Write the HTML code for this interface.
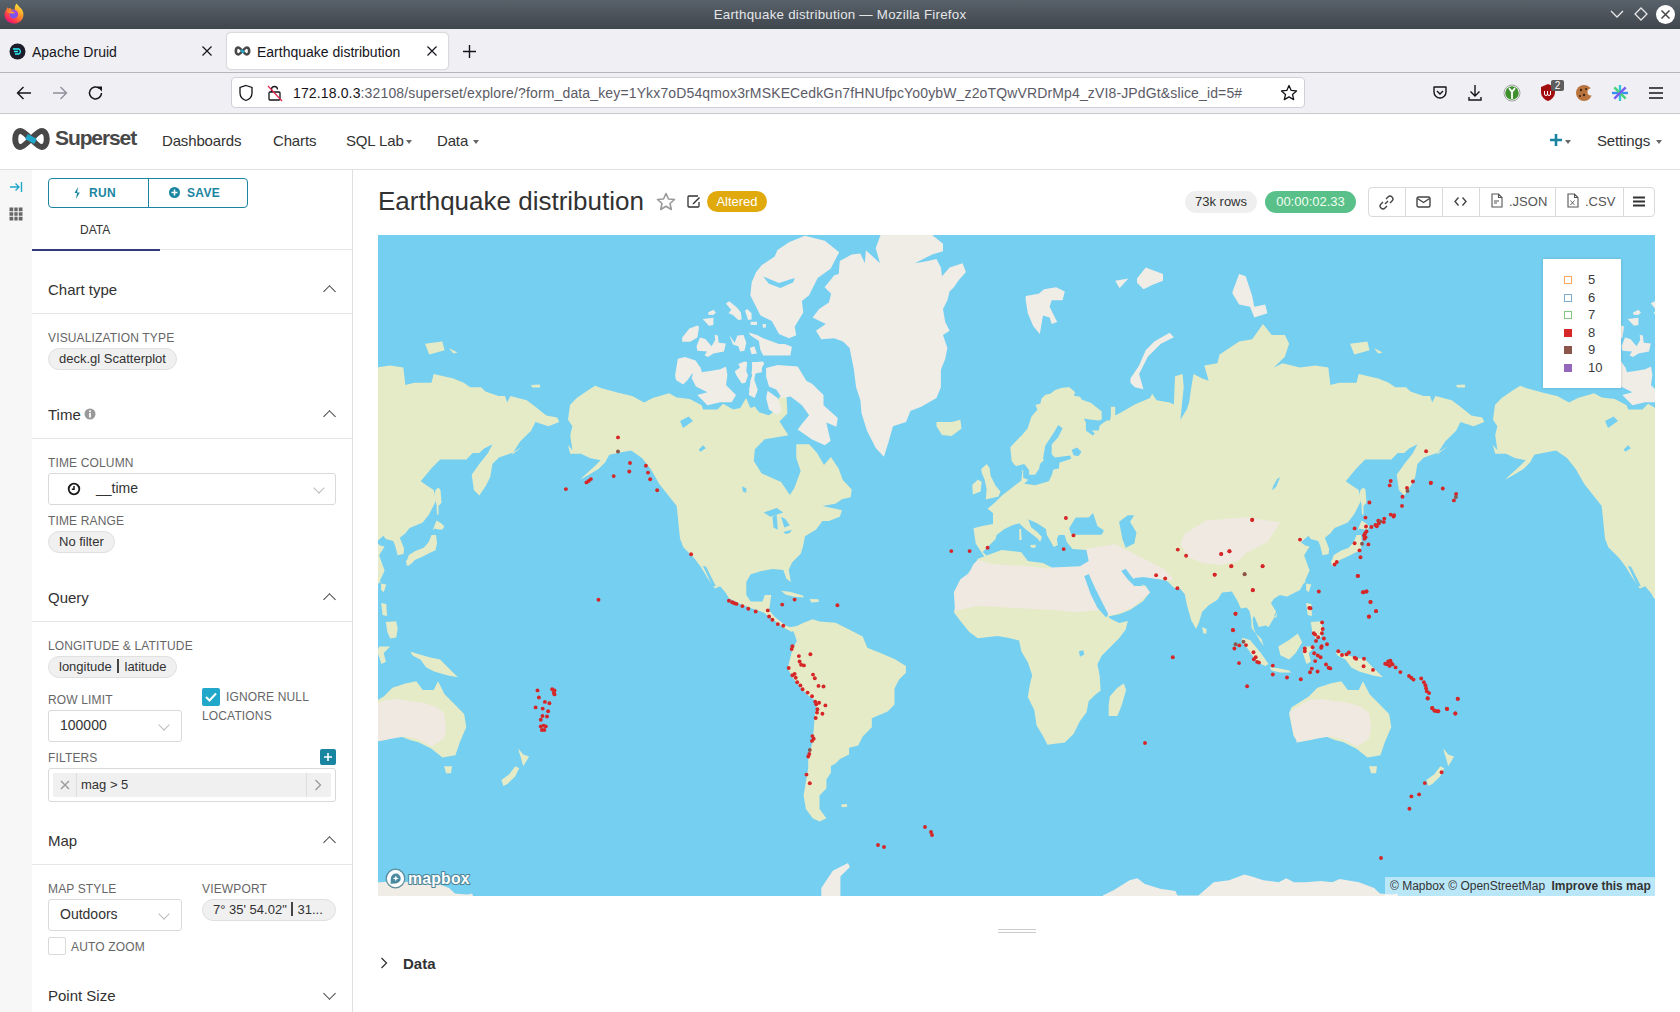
<!DOCTYPE html>
<html><head><meta charset="utf-8">
<style>
*{box-sizing:border-box;margin:0;padding:0}
html,body{width:1680px;height:1012px;overflow:hidden;background:#fff;font-family:"Liberation Sans",sans-serif;position:relative}
.a{position:absolute;white-space:nowrap}
#titlebar{left:0;top:0;width:1680px;height:29px;background:linear-gradient(#59616a,#3f464d)}
#tabbar{left:0;top:29px;width:1680px;height:44px;background:#f0f0f4;border-bottom:1px solid #b6b6ba}
#navbar{left:0;top:73px;width:1680px;height:41px;background:#f0f0f4;border-bottom:1px solid #c9c9cc}
.tabtxt{font-size:14px;color:#15141a;top:44px}
#urlbar{left:231px;top:77px;width:1074px;height:31px;background:#fff;border:1px solid #cfcfd8;border-radius:4px}
#sshead{left:0;top:114px;width:1680px;height:56px;background:#fff;border-bottom:1px solid #e0e0e0}
.nav{font-size:15px;color:#323232;top:132px;letter-spacing:-0.15px}
.caret{width:0;height:0;border-left:3.5px solid transparent;border-right:3.5px solid transparent;border-top:4px solid #666}
#leftstrip{left:0;top:170px;width:32px;height:842px;background:#f7f7f7}
#panel{left:32px;top:170px;width:321px;height:842px;background:#fff;border-right:1px solid #e0e0e0}
.sec{font-size:15px;color:#323232;left:48px}
.lbl{font-size:12px;color:#666;left:48px;letter-spacing:0.15px}
.div{left:32px;width:320px;height:1px;background:#e6e6e6}
.chip{background:#f0f0f0;border:1px solid #e0e0e0;border-radius:11px;font-size:13px;color:#323232;height:22px;line-height:20px;padding:0 10px}
.sel{border:1px solid #d9d9d9;border-radius:3px;background:#fff}
.up{width:9px;height:9px;border-left:1.6px solid #444;border-top:1.6px solid #444;transform:rotate(45deg)}
.dn{width:9px;height:9px;border-right:1.6px solid #444;border-bottom:1.6px solid #444;transform:rotate(45deg)}
.chev{width:8px;height:8px;border-right:1px solid #bbb;border-bottom:1px solid #bbb;transform:rotate(45deg)}
</style></head><body>

<!-- window title bar -->
<div class="a" id="titlebar"></div>
<div class="a" style="left:0;top:7px;width:1680px;text-align:center;font-size:13.3px;letter-spacing:0.25px;color:#e4e6e8">Earthquake distribution — Mozilla Firefox</div>
<svg class="a" style="left:4px;top:3px" width="21" height="21" viewBox="0 0 21 21"><defs><linearGradient id="ffg" x1="0.85" y1="0.1" x2="0.25" y2="0.95"><stop offset="0" stop-color="#ffe83a"/><stop offset="0.45" stop-color="#ff8a2a"/><stop offset="0.8" stop-color="#ff3450"/><stop offset="1" stop-color="#e6177a"/></linearGradient><radialGradient id="ffp" cx="0.45" cy="0.7" r="0.7"><stop offset="0" stop-color="#6b5cf0"/><stop offset="1" stop-color="#a93ee6"/></radialGradient></defs><path d="M12.4 0.6 C14 2.4 14.9 3.6 16.6 5 C18.6 7 19.6 9.3 19.4 12 C19.2 17 15 20.6 9.8 20.6 C4.5 20.6 0.6 16.6 0.6 11.8 C0.6 9.2 1.6 7.5 2.7 5.9 L3.2 4.2 L4.6 5.8 L6.3 4.7 L7.2 6.8 C8.5 6.3 9.8 6.5 10.8 7.1 C10.5 4.6 11 2.3 12.4 0.6Z" fill="url(#ffg)"/><circle cx="9.8" cy="11.2" r="4.3" fill="url(#ffp)"/><path d="M2.6 8.4 L8.5 8.6 L11.2 9.8 L9 10.6 L6.5 10.2Z" fill="#ffa51f"/></svg>
<svg class="a" style="left:1610px;top:8px" width="14" height="12"><path d="M1 3 L7 9 L13 3" stroke="#e8e8e8" stroke-width="1.3" fill="none"/></svg>
<svg class="a" style="left:1634px;top:7px" width="14" height="14"><path d="M7 1 L13 7 L7 13 L1 7Z" stroke="#e8e8e8" stroke-width="1.3" fill="none"/></svg>
<svg class="a" style="left:1655px;top:4px" width="21" height="21"><circle cx="10.5" cy="10.5" r="9.5" fill="#fff"/><path d="M6.5 6.5 L14.5 14.5 M14.5 6.5 L6.5 14.5" stroke="#444" stroke-width="1.5"/></svg>

<!-- tab bar -->
<div class="a" id="tabbar"></div>
<svg class="a" style="left:9px;top:43px" width="17" height="17"><circle cx="8.5" cy="8.5" r="8" fill="#1c1c2a"/><path d="M4 6 H10 A3 3 0 0 1 10 11 H6 M5 8.5 H9" stroke="#2ceefc" stroke-width="1.3" fill="none"/></svg>
<div class="a tabtxt" style="left:32px">Apache Druid</div>
<svg class="a" style="left:201px;top:45px" width="12" height="12"><path d="M1.5 1.5 L10.5 10.5 M10.5 1.5 L1.5 10.5" stroke="#15141a" stroke-width="1.2"/></svg>
<div class="a" style="left:227px;top:33px;width:221px;height:36px;background:#fff;border-radius:4px;box-shadow:0 0 2px rgba(0,0,0,0.35)"></div>
<svg class="a" style="left:234px;top:46px" width="17" height="10" viewBox="0 0 17 10"><path d="M4.3 1.5 C1 1.5 1 8.5 4.3 8.5 C6.5 8.5 10.5 1.5 12.7 1.5 C16 1.5 16 8.5 12.7 8.5 C10.5 8.5 6.5 1.5 4.3 1.5Z" stroke="#484848" stroke-width="2.6" fill="none"/><path d="M7 4 L10 6.5" stroke="#20a7c9" stroke-width="2.4"/></svg>
<div class="a tabtxt" style="left:257px">Earthquake distribution</div>
<svg class="a" style="left:426px;top:45px" width="12" height="12"><path d="M1.5 1.5 L10.5 10.5 M10.5 1.5 L1.5 10.5" stroke="#15141a" stroke-width="1.2"/></svg>
<svg class="a" style="left:462px;top:44px" width="15" height="15"><path d="M7.5 1 V14 M1 7.5 H14" stroke="#15141a" stroke-width="1.4"/></svg>

<!-- nav bar -->
<div class="a" id="navbar"></div>
<svg class="a" style="left:15px;top:85px" width="18" height="16"><path d="M16 8 H2.5 M8.5 2 L2.5 8 L8.5 14" stroke="#15141a" stroke-width="1.4" fill="none"/></svg>
<svg class="a" style="left:51px;top:85px" width="18" height="16"><path d="M2 8 H15.5 M9.5 2 L15.5 8 L9.5 14" stroke="#8f8f9d" stroke-width="1.4" fill="none"/></svg>
<svg class="a" style="left:87px;top:84px" width="18" height="18"><path d="M14.5 9 A6 6 0 1 1 12.5 4.5" stroke="#15141a" stroke-width="1.5" fill="none"/><path d="M10 2.5 L15 2.5 L15 7.5Z" fill="#15141a"/></svg>
<div class="a" id="urlbar"></div>
<svg class="a" style="left:238px;top:84px" width="16" height="18"><path d="M8 1.5 L14 3.5 V9 C14 13 11 15.5 8 16.5 C5 15.5 2 13 2 9 V3.5Z" stroke="#15141a" stroke-width="1.3" fill="none"/></svg>
<svg class="a" style="left:266px;top:84px" width="18" height="18"><rect x="3" y="8" width="11" height="8" rx="1" stroke="#15141a" stroke-width="1.3" fill="none"/><path d="M5.5 8 V5.5 A3 3 0 0 1 11.5 5.5" stroke="#15141a" stroke-width="1.3" fill="none"/><path d="M2 2 L16 17" stroke="#e22850" stroke-width="1.3"/></svg>
<div class="a" style="left:293px;top:85px;font-size:14px;color:#15141a;letter-spacing:0.14px">172.18.0.3<span style="color:#5b5b66">:32108/superset/explore/?form_data_key=1Ykx7oD54qmox3rMSKECedkGn7fHNUfpcYo0ybW_z2oTQwVRDrMp4_zVI8-JPdGt&amp;slice_id=5#</span></div>
<svg class="a" style="left:1280px;top:84px" width="18" height="18"><path d="M9 1.5 L11.2 6.4 L16.5 6.9 L12.5 10.4 L13.7 15.6 L9 12.9 L4.3 15.6 L5.5 10.4 L1.5 6.9 L6.8 6.4Z" stroke="#15141a" stroke-width="1.3" fill="none" stroke-linejoin="round"/></svg>
<svg class="a" style="left:1432px;top:85px" width="16" height="16"><path d="M2 2 H14 V7 A6 6 0 0 1 2 7Z" stroke="#15141a" stroke-width="1.4" fill="none" stroke-linejoin="round"/><path d="M5 6 L8 9 L11 6" stroke="#15141a" stroke-width="1.4" fill="none"/></svg>
<svg class="a" style="left:1467px;top:84px" width="16" height="18"><path d="M8 1 V12 M3.5 7.5 L8 12 L12.5 7.5 M2 13 V16 H14 V13" stroke="#15141a" stroke-width="1.4" fill="none"/></svg>
<svg class="a" style="left:1503px;top:84px" width="18" height="18"><circle cx="9" cy="9" r="8" fill="#fff" stroke="#888" stroke-width="0.8"/><circle cx="9" cy="9" r="6.8" fill="#3f8f2f"/><path d="M9 6 V15 M6 4 L9 8 L12 4" stroke="#fff" stroke-width="1.8" fill="none"/></svg>
<svg class="a" style="left:1539px;top:79px" width="26" height="24"><path d="M2 8 L9 5 L16 8 V13 C16 18 12 21 9 22 C6 21 2 18 2 13Z" fill="#a10d0d"/><path d="M5.5 12 V15 A1.5 1.5 0 0 0 8.5 15 V12 M8.5 15 A1.5 1.5 0 0 0 11.5 15 V12" stroke="#fff" stroke-width="1" fill="none"/><rect x="12" y="1" width="13" height="11" rx="2" fill="#5d5d5d"/><text x="18.5" y="10" font-size="10" fill="#fff" text-anchor="middle" font-family="Liberation Sans">2</text></svg>
<svg class="a" style="left:1575px;top:84px" width="18" height="18"><circle cx="9" cy="9" r="8" fill="#b9743e"/><circle cx="16" cy="8" r="3.5" fill="#f0f0f4"/><circle cx="6" cy="6" r="1.2" fill="#3b2413"/><circle cx="9" cy="11" r="1.2" fill="#3b2413"/><circle cx="5" cy="12" r="1" fill="#3b2413"/><circle cx="11" cy="5" r="1" fill="#3b2413"/></svg>
<svg class="a" style="left:1611px;top:84px" width="18" height="18"><path d="M9 1 V17" stroke="#35c4d8" stroke-width="2.4"/><path d="M1 9 H17" stroke="#3a8ff0" stroke-width="2.4"/><path d="M3.3 3.3 L14.7 14.7" stroke="#46d37a" stroke-width="2.4"/><path d="M14.7 3.3 L3.3 14.7" stroke="#7b5cf0" stroke-width="2.4"/></svg>
<svg class="a" style="left:1648px;top:86px" width="16" height="14"><path d="M1 2 H15 M1 7 H15 M1 12 H15" stroke="#15141a" stroke-width="1.4"/></svg>

<!-- superset header -->
<div class="a" id="sshead"></div>
<svg class="a" style="left:10px;top:127px" width="42" height="24" viewBox="0 0 42 24"><path d="M10.5 4 C3.5 4 3.5 20 10.5 20 C15.5 20 26.5 4 31.5 4 C38.5 4 38.5 20 31.5 20 C26.5 20 15.5 4 10.5 4Z" stroke="#484848" stroke-width="6" fill="none"/><path d="M16.5 9.5 L25.5 14.5" stroke="#20a7c9" stroke-width="5.5"/></svg>
<div class="a" style="left:55px;top:126px;font-size:21px;font-weight:bold;color:#484848;letter-spacing:-1.1px">Superset</div>
<div class="a nav" style="left:162px">Dashboards</div>
<div class="a nav" style="left:273px">Charts</div>
<div class="a nav" style="left:346px">SQL Lab</div>
<div class="a caret" style="left:406px;top:140px"></div>
<div class="a nav" style="left:437px">Data</div>
<div class="a caret" style="left:473px;top:140px"></div>
<svg class="a" style="left:1549px;top:133px" width="14" height="14"><path d="M7 1 V13 M1 7 H13" stroke="#1a85a0" stroke-width="2.6"/></svg>
<div class="a caret" style="left:1565px;top:140px"></div>
<div class="a nav" style="left:1597px">Settings</div>
<div class="a caret" style="left:1656px;top:140px"></div>

<!-- left strip & panel -->
<div class="a" id="leftstrip"></div>
<svg class="a" style="left:9px;top:181px" width="14" height="12"><path d="M1 6 H10 M6.5 2.5 L10 6 L6.5 9.5 M12.5 1 V11" stroke="#20a7c9" stroke-width="1.4" fill="none"/></svg>
<svg class="a" style="left:9px;top:207px" width="14" height="14"><rect x="0.5" y="0.5" width="13" height="13" fill="#666"/><path d="M4.8 0 V14 M9.2 0 V14 M0 4.8 H14 M0 9.2 H14" stroke="#f7f7f7" stroke-width="1.1"/></svg>
<div class="a" id="panel"></div>

<div class="a" style="left:48px;top:178px;width:200px;height:30px;border:1px solid #1a85a0;border-radius:4px"></div>
<div class="a" style="left:148px;top:178px;width:1px;height:30px;background:#1a85a0"></div>
<svg class="a" style="left:73px;top:187px" width="8" height="12"><path d="M5 0 L1.5 6 H4 L3 12 L6.8 5.5 H4.2Z" fill="#1a85a0"/></svg>
<div class="a" style="left:89px;top:186px;font-size:12px;font-weight:bold;color:#1a85a0;letter-spacing:0.3px">RUN</div>
<svg class="a" style="left:169px;top:187px" width="11" height="11"><circle cx="5.5" cy="5.5" r="5.5" fill="#1a85a0"/><path d="M5.5 2.5 V8.5 M2.5 5.5 H8.5" stroke="#fff" stroke-width="1.5"/></svg>
<div class="a" style="left:187px;top:186px;font-size:12px;font-weight:bold;color:#1a85a0;letter-spacing:0.3px">SAVE</div>
<div class="a" style="left:80px;top:223px;font-size:12px;color:#323232">DATA</div>
<div class="a" style="left:32px;top:249px;width:320px;height:1px;background:#e6e6e6"></div>
<div class="a" style="left:32px;top:249px;width:128px;height:2px;background:#323c7a"></div>

<div class="a sec" style="top:281px">Chart type</div>
<div class="a up" style="left:325px;top:287px"></div>
<div class="a div" style="top:313px"></div>
<div class="a lbl" style="top:331px">VISUALIZATION TYPE</div>
<div class="a chip" style="left:48px;top:348px">deck.gl Scatterplot</div>

<div class="a sec" style="top:406px">Time</div>
<svg class="a" style="left:84px;top:408px" width="12" height="12"><circle cx="6" cy="6" r="5.5" fill="#999"/><rect x="5.1" y="5" width="1.8" height="4.5" fill="#fff"/><circle cx="6" cy="3.3" r="1" fill="#fff"/></svg>
<div class="a up" style="left:325px;top:412px"></div>
<div class="a div" style="top:438px"></div>
<div class="a lbl" style="top:456px">TIME COLUMN</div>
<div class="a sel" style="left:48px;top:473px;width:288px;height:32px"></div>
<svg class="a" style="left:67px;top:482px" width="14" height="14"><circle cx="7" cy="7" r="5.3" stroke="#1a1a1a" stroke-width="1.8" fill="none"/><path d="M7 4 V7.3 H4.8" stroke="#1a1a1a" stroke-width="1.5" fill="none"/></svg>
<div class="a" style="left:96px;top:480px;font-size:14px;color:#323232">__time</div>
<div class="a chev" style="left:315px;top:484px"></div>
<div class="a lbl" style="top:514px">TIME RANGE</div>
<div class="a chip" style="left:48px;top:531px">No filter</div>

<div class="a sec" style="top:589px">Query</div>
<div class="a up" style="left:325px;top:595px"></div>
<div class="a div" style="top:621px"></div>
<div class="a lbl" style="top:639px">LONGITUDE &amp; LATITUDE</div>
<div class="a chip" style="left:48px;top:656px">longitude <span style="display:inline-block;width:1.5px;height:14px;background:#444;vertical-align:-2px;margin:0 2px"></span> latitude</div>
<div class="a lbl" style="top:693px">ROW LIMIT</div>
<div class="a sel" style="left:48px;top:710px;width:134px;height:32px"></div>
<div class="a" style="left:60px;top:717px;font-size:14px;color:#323232">100000</div>
<div class="a chev" style="left:160px;top:721px"></div>
<div class="a" style="left:202px;top:688px;width:18px;height:18px;background:#20a7c9;border-radius:2px"></div>
<svg class="a" style="left:202px;top:688px" width="18" height="18"><path d="M4 9 L7.5 12.5 L14 5.5" stroke="#fff" stroke-width="2" fill="none"/></svg>
<div class="a lbl" style="left:226px;top:690px">IGNORE NULL</div>
<div class="a lbl" style="left:202px;top:709px">LOCATIONS</div>
<div class="a lbl" style="top:751px">FILTERS</div>
<div class="a" style="left:320px;top:749px;width:16px;height:16px;background:#1a85a0;border-radius:2px"></div>
<svg class="a" style="left:320px;top:749px" width="16" height="16"><path d="M8 4 V12 M4 8 H12" stroke="#fff" stroke-width="1.6"/></svg>
<div class="a sel" style="left:48px;top:768px;width:288px;height:34px"></div>
<div class="a" style="left:53px;top:773px;width:278px;height:24px;background:#f0f0f0;border-radius:2px"></div>
<div class="a" style="left:76px;top:773px;width:1px;height:24px;background:#dedede"></div>
<div class="a" style="left:306px;top:773px;width:1px;height:24px;background:#dedede"></div>
<svg class="a" style="left:60px;top:780px" width="10" height="10"><path d="M1 1 L9 9 M9 1 L1 9" stroke="#999" stroke-width="1.4"/></svg>
<div class="a" style="left:81px;top:777px;font-size:13px;color:#323232">mag &gt; 5</div>
<svg class="a" style="left:314px;top:779px" width="8" height="12"><path d="M1.5 1 L6.5 6 L1.5 11" stroke="#999" stroke-width="1.3" fill="none"/></svg>

<div class="a sec" style="top:832px">Map</div>
<div class="a up" style="left:325px;top:838px"></div>
<div class="a div" style="top:864px"></div>
<div class="a lbl" style="top:882px">MAP STYLE</div>
<div class="a lbl" style="left:202px;top:882px">VIEWPORT</div>
<div class="a sel" style="left:48px;top:899px;width:134px;height:32px"></div>
<div class="a" style="left:60px;top:906px;font-size:14px;color:#323232">Outdoors</div>
<div class="a chev" style="left:160px;top:910px"></div>
<div class="a chip" style="left:202px;top:899px;width:134px">7° 35' 54.02" <span style="display:inline-block;width:1.5px;height:14px;background:#444;vertical-align:-2px;margin:0 1px"></span> 31...</div>
<div class="a" style="left:48px;top:937px;width:18px;height:18px;border:1px solid #d9d9d9;border-radius:2px"></div>
<div class="a lbl" style="left:71px;top:940px">AUTO ZOOM</div>
<div class="a sec" style="top:987px">Point Size</div>
<div class="a dn" style="left:325px;top:989px"></div>

<!-- chart header -->
<div class="a" style="left:378px;top:186px;font-size:26px;color:#323232">Earthquake distribution</div>
<svg class="a" style="left:656px;top:192px" width="20" height="19"><path d="M10 1.5 L12.5 7 L18.5 7.5 L14 11.5 L15.3 17.5 L10 14.3 L4.7 17.5 L6 11.5 L1.5 7.5 L7.5 7Z" stroke="#999" stroke-width="1.6" fill="none" stroke-linejoin="round"/></svg>
<svg class="a" style="left:687px;top:195px" width="14" height="13"><path d="M11 1 H2 A1 1 0 0 0 1 2 V11 A1 1 0 0 0 2 12 H11 A1 1 0 0 0 12 11 V7" stroke="#323232" stroke-width="1.3" fill="none"/><path d="M6 8 L5.5 9.5 L7 9 L13 3 L12 2Z" fill="#323232"/></svg>
<div class="a" style="left:707px;top:191px;width:60px;height:21px;background:#e0a90c;border-radius:11px;color:#fff;font-size:13px;text-align:center;line-height:21px">Altered</div>

<div class="a" style="left:1185px;top:191px;width:72px;height:22px;background:#efefef;border-radius:11px;font-size:13px;color:#323232;text-align:center;line-height:22px">73k rows</div>
<div class="a" style="left:1265px;top:191px;width:91px;height:22px;background:#5ac08a;border-radius:11px;font-size:13px;color:#f0fff0;text-align:center;line-height:22px">00:00:02.33</div>
<div class="a" style="left:1368px;top:187px;width:287px;height:30px;border:1px solid #d9d9d9;border-radius:4px"></div>
<div class="a" style="left:1405px;top:187px;width:1px;height:30px;background:#d9d9d9"></div>
<div class="a" style="left:1442px;top:187px;width:1px;height:30px;background:#d9d9d9"></div>
<div class="a" style="left:1479px;top:187px;width:1px;height:30px;background:#d9d9d9"></div>
<div class="a" style="left:1555px;top:187px;width:1px;height:30px;background:#d9d9d9"></div>
<div class="a" style="left:1623px;top:187px;width:1px;height:30px;background:#d9d9d9"></div>
<svg class="a" style="left:1379px;top:195px" width="15" height="15"><path d="M6 9 L9 6 M7 4 L9 2 A2.6 2.6 0 0 1 13 6 L11 8 M4 7 L2 9 A2.6 2.6 0 0 0 6 13 L8 11" stroke="#444" stroke-width="1.4" fill="none"/></svg>
<svg class="a" style="left:1416px;top:196px" width="15" height="12"><rect x="1" y="1" width="13" height="10" rx="1.5" stroke="#444" stroke-width="1.4" fill="none"/><path d="M1.5 2.5 L7.5 6.5 L13.5 2.5" stroke="#444" stroke-width="1.4" fill="none"/></svg>
<svg class="a" style="left:1454px;top:196px" width="13" height="11"><path d="M4.5 1.5 L1 5.5 L4.5 9.5 M8.5 1.5 L12 5.5 L8.5 9.5" stroke="#444" stroke-width="1.4" fill="none"/></svg>
<svg class="a" style="left:1491px;top:193px" width="12" height="15"><path d="M1 1 H7.5 L11 4.5 V14 H1Z M7.5 1 V4.5 H11" stroke="#555" stroke-width="1.1" fill="none"/><path d="M3 8 H8 M3 10 H6" stroke="#555" stroke-width="1"/></svg>
<div class="a" style="left:1509px;top:194px;font-size:13px;color:#555">.JSON</div>
<svg class="a" style="left:1567px;top:193px" width="12" height="15"><path d="M1 1 H7.5 L11 4.5 V14 H1Z M7.5 1 V4.5 H11" stroke="#555" stroke-width="1.1" fill="none"/><path d="M3.5 7.5 L7.5 12 M7.5 7.5 L3.5 12" stroke="#555" stroke-width="0.9"/></svg>
<div class="a" style="left:1585px;top:194px;font-size:13px;color:#555">.CSV</div>
<svg class="a" style="left:1633px;top:196px" width="12" height="11"><path d="M0 1.5 H12 M0 5.5 H12 M0 9.5 H12" stroke="#323232" stroke-width="1.8"/></svg>

<!-- MAP -->
<div class="a" id="map" style="left:378px;top:235px;width:1277px;height:661px;background:#75cff0;overflow:hidden">
<!--MAPSVG--><svg width="1277" height="661" style="position:absolute;left:0;top:0">
<g transform="translate(-925 0)">
<path fill="#e6ebc7" d="M192.0 170.0 L198.7 163.0 L209.6 155.4 L217.2 150.7 L223.7 153.3 L242.2 158.3 L254.2 160.9 L266.1 167.4 L274.8 163.0 L291.1 158.3 L298.7 162.6 L311.8 164.1 L323.6 170.2 L325.1 174.5 L339.4 174.5 L345.1 168.7 L355.2 174.5 L362.3 173.0 L368.1 163.0 L372.4 173.0 L376.7 171.6 L381.0 177.3 L391.0 180.2 L394.6 177.6 L401.5 161.8 L408.4 159.8 L409.4 178.6 L401.5 186.5 L410.4 200.3 L398.6 202.3 L386.7 204.3 L376.8 214.2 L375.8 226.0 L383.5 238.3 L403.1 247.0 L411.8 260.0 L416.1 253.5 L422.7 236.1 L418.3 223.0 L418.3 214.2 L418.3 209.2 L431.2 209.2 L439.1 218.1 L446.0 230.0 L452.9 222.1 L460.8 233.9 L464.8 245.0 L473.7 254.6 L472.7 262.2 L464.0 264.3 L457.4 268.7 L444.4 270.9 L464.0 275.2 L461.8 281.7 L450.9 286.1 L444.4 286.1 L437.9 294.8 L427.0 301.3 L424.8 312.2 L422.7 318.7 L414.0 327.4 L410.7 335.0 L412.9 347.0 L408.5 343.7 L405.3 335.0 L394.4 333.9 L383.5 336.1 L372.7 339.3 L368.3 347.0 L368.3 360.0 L372.7 366.5 L384.6 366.5 L386.8 360.0 L393.3 360.0 L391.1 375.2 L396.6 381.7 L407.4 390.4 L416.1 393.7 L414.0 397.0 L405.3 392.6 L394.4 383.9 L385.7 377.4 L372.7 373.0 L361.8 368.7 L350.9 363.3 L347.7 357.8 L342.2 351.3 L336.8 353.5 L329.2 342.6 L322.7 331.7 L316.1 323.0 L305.3 312.2 L302.0 303.5 L299.8 281.7 L298.7 270.9 L290.0 260.0 L281.3 249.1 L272.7 233.9 L264.0 223.0 L253.1 215.4 L242.2 217.6 L231.3 219.8 L227.0 227.4 L220.5 233.9 L209.6 240.4 L202.0 244.8 L205.3 241.5 L216.1 231.7 L222.7 225.2 L211.8 223.0 L203.1 218.7 L192.2 218.7 L190.0 210.0 L194.4 215.2 L192.2 200.0 L194.4 191.3 L190.0 184.8Z"/>
<path fill="#f0ece6" d="M388.1 132.9 L399.6 130.0 L419.7 131.5 L428.3 145.8 L434.0 148.7 L445.5 160.1 L445.5 170.2 L459.8 183.1 L458.4 191.7 L448.3 187.4 L452.6 206.0 L446.9 210.3 L434.0 204.6 L419.7 194.5 L424.0 188.8 L431.1 180.2 L424.0 170.2 L412.5 161.6 L403.9 163.0 L398.2 154.4 L391.0 151.5 L388.1 141.5Z"/>
<path fill="#f0ece6" d="M316.5 134.3 L322.2 131.5 L323.6 137.2 L333.7 135.8 L342.3 134.3 L348.0 131.5 L349.4 140.1 L348.0 150.1 L358.0 160.1 L353.7 167.3 L342.3 167.3 L329.4 170.2 L319.3 160.1 L329.4 157.3 L317.9 151.5 L313.6 142.9Z"/>
<path fill="#f0ece6" d="M373.8 127.2 L383.8 127.2 L383.8 137.2 L376.7 138.6 L375.2 144.4 L379.5 155.8 L376.7 163.0 L370.9 160.1 L372.4 145.8 L375.2 137.2Z"/>
<path fill="#f0ece6" d="M389.6 155.8 L399.6 163.0 L403.9 174.5 L399.6 180.2 L391.0 174.5 L388.1 163.0Z"/>
<path fill="#f0ece6" d="M383.8 30.1 L396.7 21.5 L399.5 15.0 L411.0 7.2 L426.8 0.7 L446.8 5.7 L461.2 17.2 L452.6 33.7 L439.7 43.0 L431.1 60.2 L423.9 65.9 L425.3 77.4 L416.7 91.7 L418.2 100.3 L411.0 103.2 L401.0 98.9 L393.8 86.0 L382.3 80.3 L372.3 60.2 L373.7 47.3 L378.0 37.3Z"/>
<path fill="#f0ece6" d="M370.9 97.5 L379.5 100.3 L385.2 103.2 L401.0 108.9 L406.7 108.9 L413.9 111.8 L412.4 120.4 L396.7 120.4 L385.2 120.4 L382.3 114.7 L380.9 106.1 L372.3 100.3Z"/>
<path fill="#e6ebc7" d="M403.1 355.7 L411.8 356.7 L424.8 360.4 L425.9 362.6 L416.1 361.7 L407.4 359.6Z"/>
<path fill="#e6ebc7" d="M431.8 363.9 L440.5 364.3 L440.9 367.0 L433.1 367.4Z"/>
<path fill="#f0ece6" d="M504.2 0.0 L554.2 0.0 L565.0 8.7 L565.0 16.3 L554.2 19.6 L536.8 28.3 L549.8 26.1 L558.5 23.9 L562.9 32.6 L564.0 41.3 L571.6 32.6 L584.6 28.3 L587.9 37.0 L580.3 45.7 L575.9 52.2 L571.6 56.5 L569.4 65.2 L565.0 73.9 L567.2 87.0 L571.6 95.7 L565.0 100.0 L569.4 113.0 L567.2 123.9 L562.9 134.8 L562.9 152.2 L558.5 163.0 L543.3 171.7 L532.4 176.1 L528.1 187.0 L515.0 191.3 L510.7 206.5 L505.9 221.7 L497.7 213.0 L489.0 195.7 L483.5 178.3 L482.4 165.2 L478.1 152.2 L475.9 134.8 L471.6 113.0 L465.0 106.5 L456.3 103.3 L443.3 104.3 L437.9 95.7 L447.7 89.1 L434.6 82.6 L441.1 73.9 L450.9 67.4 L453.1 58.7 L446.6 52.2 L456.3 40.2 L460.7 39.1 L461.8 26.1 L473.7 19.6 L482.4 18.5 L486.8 28.3 L487.9 15.2 L502.0 28.3 L497.7 13.0 L504.2 -4.3Z"/>
<path fill="#e6ebc7" d="M558.5 187.0 L573.7 187.0 L582.4 184.8 L583.5 193.5 L573.7 201.1 L564.0 200.0 L558.5 191.3Z"/>
<path fill="#f0ece6" d="M647.7 60.9 L660.7 58.7 L666.1 54.3 L678.1 52.2 L686.8 56.5 L684.6 65.2 L673.7 65.2 L671.6 71.7 L679.2 87.0 L673.7 89.1 L671.6 82.6 L665.0 80.4 L661.8 98.9 L655.3 91.3 L649.8 78.3 L647.7 65.2Z"/>
<path fill="#e6ebc7" d="M636.7 230.0 L633.7 226.1 L632.3 212.2 L641.7 202.3 L643.6 200.4 L649.6 193.4 L653.5 181.6 L659.4 174.7 L657.5 169.7 L662.4 168.7 L663.4 163.8 L667.4 159.8 L672.3 158.8 L677.2 154.9 L683.2 152.9 L691.1 151.9 L697.0 156.9 L696.0 160.8 L702.0 161.8 L703.9 164.8 L712.8 167.7 L723.7 176.6 L723.7 184.5 L720.7 185.5 L711.8 184.5 L705.9 183.6 L707.9 187.5 L707.9 195.4 L714.8 200.4 L716.8 198.4 L713.8 195.4 L720.7 195.4 L721.7 190.5 L728.6 185.5 L732.0 185.5 L732.9 180.4 L732.9 171.7 L737.2 171.7 L737.2 180.4 L741.6 178.3 L756.8 169.6 L772.0 163.0 L774.2 158.7 L778.5 165.2 L791.6 167.4 L795.9 169.6 L797.0 141.3 L804.6 139.1 L805.7 152.2 L802.4 184.8 L809.0 173.9 L811.1 167.4 L813.3 152.2 L815.5 139.1 L824.2 143.5 L830.7 145.7 L826.3 130.4 L839.4 128.3 L841.6 119.6 L861.1 106.5 L874.2 104.3 L885.0 89.1 L893.7 100.0 L906.8 100.0 L911.1 108.7 L906.8 121.7 L895.9 132.6 L904.6 128.3 L922.0 132.6 L937.2 130.4 L950.3 132.6 L952.4 150.0 L961.1 147.8 L978.5 147.8 L980.7 139.1 L1000.3 143.5 L1010.7 147.8 L1017.2 152.2 L1028.1 152.2 L1032.4 156.5 L1045.5 160.9 L1052.0 160.9 L1054.2 167.4 L1057.4 160.9 L1073.7 165.2 L1082.4 171.7 L1093.3 180.4 L1104.2 182.6 L1106.3 187.0 L1095.5 191.3 L1082.4 187.0 L1078.1 195.7 L1067.2 206.5 L1058.5 220.0 L1078.5 205.0 L1069.8 211.5 L1059.0 218.0 L1052.4 220.2 L1045.9 222.4 L1039.4 228.9 L1037.2 242.0 L1032.9 250.7 L1026.3 260.4 L1020.9 255.0 L1018.7 239.8 L1026.3 228.9 L1035.0 218.0 L1039.4 209.3 L1030.7 213.7 L1026.3 218.0 L1019.8 218.0 L1013.3 224.6 L1004.6 224.6 L987.2 224.6 L978.5 233.3 L967.7 246.3 L974.2 250.7 L980.7 255.0 L982.9 265.9 L976.3 278.9 L969.8 287.6 L956.6 293.0 L952.2 298.5 L946.8 302.8 L949.0 308.3 L951.1 313.7 L950.6 319.1 L944.6 320.2 L942.4 311.5 L940.3 306.1 L932.7 303.9 L930.5 300.7 L922.9 307.2 L927.2 310.4 L931.6 311.5 L926.1 320.2 L931.6 335.4 L927.2 345.2 L922.0 355.0 L909.0 361.5 L898.1 359.3 L891.6 365.9 L898.1 376.7 L891.6 389.8 L880.7 392.0 L876.3 381.1 L872.0 365.9 L865.5 359.3 L928.5 346.3 L917.7 355.0 L904.6 358.3 L895.9 363.7 L891.6 370.2 L893.7 376.7 L898.1 383.3 L899.3 377.4 L890.4 392.2 L880.6 384.3 L875.6 381.3 L874.6 384.3 L875.6 393.2 L878.6 400.1 L882.0 406.0 L885.7 411.1 L883.5 404.0 L877.6 398.1 L873.6 393.2 L873.2 384.3 L871.7 376.4 L868.7 372.4 L862.8 373.4 L859.8 366.5 L853.9 356.6 L844.0 357.6 L839.4 364.8 L830.7 370.2 L824.2 376.7 L820.9 387.6 L818.1 394.1 L813.3 385.4 L809.0 370.2 L806.8 359.3 L802.4 353.9 L795.9 352.8 L789.4 346.3 L778.5 343.0 L765.5 340.9 L756.8 342.0 L754.6 346.3 L767.7 350.7 L772.0 357.2 L765.0 366.3 L752.0 375.0 L741.1 379.3 L730.3 381.5 L732.4 383.7 L741.1 388.0 L749.8 385.9 L747.7 394.6 L741.1 403.3 L732.4 412.0 L723.7 420.7 L719.4 429.3 L721.6 440.2 L722.7 455.4 L717.2 459.8 L710.7 466.3 L708.5 477.2 L702.0 485.9 L695.5 498.9 L686.8 507.6 L669.4 509.8 L665.0 501.1 L658.5 490.2 L656.3 475.0 L649.8 462.0 L652.0 448.9 L654.2 440.2 L649.8 427.2 L643.3 416.3 L641.1 405.4 L632.4 403.3 L619.4 401.1 L599.8 403.3 L591.1 396.7 L582.4 385.9 L575.9 377.2 L578.1 368.5 L575.9 357.6 L582.4 344.6 L591.1 338.0 L595.5 329.3 L599.8 325.0 L584.6 345.4 L595.5 334.6 L599.8 323.7 L606.3 321.5 L597.7 308.5 L595.5 293.3 L604.2 291.1 L615.0 288.9 L615.0 278.0 L609.6 273.7 L617.2 267.2 L623.7 260.7 L632.4 254.1 L643.3 245.4 L644.4 236.7 L634.6 228.0Z"/>
<path fill="#f0ece6" d="M752.4 143.5 L761.1 130.4 L767.7 115.2 L776.3 106.5 L791.6 97.8 L795.9 102.2 L782.9 108.7 L769.8 121.7 L761.1 139.1 L765.5 154.3 L756.8 152.2 L752.4 147.8Z"/>
<path fill="#f0ece6" d="M854.6 56.5 L861.1 39.1 L867.7 41.3 L874.2 60.9 L876.3 71.7 L887.2 69.6 L889.4 78.3 L876.3 82.6 L872.0 71.7 L861.1 69.6 L854.6 58.7Z"/>
<path fill="#e6ebc7" d="M972.0 108.7 L989.4 106.5 L991.6 115.2 L976.3 119.6Z"/>
<path fill="#e6ebc7" d="M995.9 113.0 L1004.6 117.4 L1000.3 118.5Z"/>
<path fill="#f0ece6" d="M759.0 43.5 L767.7 32.6 L785.0 39.1 L785.0 45.7 L774.2 50.0 L765.5 54.3 L759.0 47.8Z"/>
<path fill="#f0ece6" d="M737.2 45.7 L750.3 43.5 L741.6 53.3Z"/>
<path fill="#e6ebc7" d="M1078.1 150.0 L1086.8 149.6 L1087.2 152.6 L1079.2 152.6Z"/>
<path fill="#e6ebc7" d="M824.2 392.0 L828.5 394.1 L828.5 398.5 L825.3 398.5Z"/>
<path fill="#e6ebc7" d="M731.8 461.5 L739.4 452.8 L745.9 448.5 L748.1 455.0 L743.7 470.2 L739.4 481.1 L730.7 481.1 L730.7 470.2Z"/>
<path fill="#e6ebc7" d="M864.4 402.8 L872.0 405.0 L882.9 418.0 L890.5 428.9 L887.2 431.1 L878.5 426.7 L869.8 413.7 L863.3 407.2Z"/>
<path fill="#e6ebc7" d="M891.6 432.2 L900.3 433.3 L911.1 435.4 L913.3 437.6 L902.4 437.6 L893.7 435.4Z"/>
<path fill="#e6ebc7" d="M900.3 411.5 L911.1 405.0 L919.8 398.5 L924.2 407.2 L917.7 418.0 L911.1 424.6 L902.4 420.2Z"/>
<path fill="#e6ebc7" d="M926.3 411.5 L937.2 411.5 L930.7 418.0 L932.9 426.7 L928.5 428.9 L926.3 422.4 L924.2 415.9Z"/>
<path fill="#e6ebc7" d="M928.1 348.5 L933.3 349.6 L930.7 357.2 L928.1 355.0Z"/>
<path fill="#e6ebc7" d="M928.1 368.0 L933.3 369.1 L934.0 381.1 L929.6 380.0Z"/>
<path fill="#e6ebc7" d="M932.8 387.0 L943.2 386.2 L944.7 393.7 L943.2 402.6 L937.2 403.4 L934.3 396.7Z"/>
<path fill="#e6ebc7" d="M913.3 472.4 L930.7 461.5 L939.4 452.8 L952.4 448.5 L963.3 446.3 L969.8 455.0 L980.7 455.0 L985.0 446.3 L991.6 459.3 L1000.3 468.0 L1011.1 478.9 L1013.3 492.0 L1006.8 507.2 L1002.4 520.2 L989.4 522.4 L978.5 513.7 L965.5 507.2 L956.8 505.0 L945.9 500.7 L932.9 505.0 L919.8 507.2 L915.5 500.7 L911.1 478.9Z"/>
<path fill="#e6ebc7" d="M412.0 392.3 L418.8 391.1 L425.6 387.7 L434.7 384.3 L441.5 386.6 L457.5 387.7 L471.1 394.5 L484.7 401.4 L489.3 412.7 L500.6 417.3 L516.5 424.1 L527.9 430.9 L527.9 437.7 L521.1 444.5 L516.5 453.6 L516.5 469.5 L509.7 476.4 L493.8 483.2 L493.8 492.3 L484.7 501.4 L480.2 510.5 L471.1 512.7 L471.1 519.5 L462.0 524.1 L457.5 528.6 L452.9 530.9 L452.9 537.7 L448.4 544.5 L448.4 553.6 L441.5 560.5 L441.5 574.1 L448.4 583.2 L441.5 586.6 L434.7 583.2 L427.9 574.1 L425.6 560.5 L427.9 546.8 L430.2 533.2 L430.2 524.1 L434.7 505.9 L435.9 492.3 L437.0 478.6 L439.3 467.3 L430.2 460.5 L421.1 451.4 L414.3 442.3 L409.7 433.2 L412.0 424.1 L414.3 415.0 L418.8 405.9 L416.5 399.1 L414.3 394.5 L407.5 391.1Z"/>
<path fill="#f0ece6" d="M0.0 649.1 L22.9 647.2 L45.9 647.2 L68.8 652.9 L76.4 658.6 L91.7 659.8 L91.7 668.2 L0.0 668.2Z"/>
<path fill="#f0ece6" d="M443.3 668.2 L443.3 652.9 L454.8 635.7 L470.0 628.1 L471.9 631.9 L462.4 641.4 L462.4 668.2Z"/>
<path fill="#f0ece6" d="M724.9 660.5 L736.4 654.8 L751.6 645.2 L759.3 643.3 L766.9 649.1 L782.2 653.7 L797.5 656.0 L799.4 660.5 L820.4 660.5 L835.7 647.2 L851.0 645.2 L866.3 639.5 L873.9 641.4 L885.4 645.2 L900.7 647.2 L908.3 643.3 L916.0 647.2 L927.4 647.2 L942.7 646.0 L954.2 647.2 L961.8 644.1 L980.9 647.2 L996.2 652.9 L1003.9 660.5 L1011.5 660.5 L1019.1 658.6 L1023.0 668.2 L724.9 668.2Z"/>
<path fill="#e6ebc7" d="M982.5 254.9 L985.5 252.4 L987.5 254.9 L988.5 267.7 L985.5 270.7 L985.5 279.6 L984.0 279.6 L983.5 269.7 L981.5 259.8Z"/>
<path fill="#e6ebc7" d="M979.6 295.4 L983.5 285.5 L988.5 288.5 L991.4 291.5 L989.4 294.4 L985.5 294.4 L981.5 293.4Z"/>
<path fill="#e6ebc7" d="M978.6 299.9 L983.0 299.9 L984.0 308.3 L982.5 315.2 L975.6 318.6 L968.7 322.1 L961.8 325.1 L958.3 329.0 L953.4 327.0 L955.8 320.1 L962.8 315.7 L970.7 312.7 L975.6 307.3Z"/>
<path fill="#e6ebc7" d="M952.9 325.6 L957.3 325.6 L956.8 330.5 L953.7 330.5Z"/>
<path fill="#e6ebc7" d="M991.1 531.3 L999.0 531.3 L998.0 538.2 L993.1 538.2Z"/>
<path fill="#e6ebc7" d="M1065.2 513.5 L1070.2 519.4 L1076.1 521.4 L1070.2 531.3 L1068.2 523.4 L1066.2 517.5Z"/>
<path fill="#e6ebc7" d="M1062.3 531.3 L1066.2 533.3 L1062.3 541.2 L1054.4 549.1 L1050.4 551.1 L1048.4 545.1 L1056.3 539.2Z"/>
<path fill="#e6ebc7" d="M957.5 416.6 L963.4 418.6 L977.2 422.6 L987.1 424.5 L995.0 432.5 L1004.9 442.3 L995.0 440.4 L981.2 436.4 L973.3 432.5 L967.4 424.5 L959.5 420.6Z"/>
<path fill="#e6ebc7" d="M463.1 569.5 L468.8 569.1 L469.3 571.8 L463.8 572.3Z"/>
<path fill="#f0ece6" d="M304.2 102.4 L311.4 93.5 L319.4 90.4 L321.1 91.7 L319.4 102.4 L312.2 106.8 L304.2 106.8Z"/>
<path fill="#f0ece6" d="M330.0 77.5 L335.4 74.8 L338.0 77.5 L335.4 80.1 L330.5 79.7Z"/>
<path fill="#f0ece6" d="M324.7 84.1 L335.4 82.8 L335.4 89.9 L330.9 90.8Z"/>
<path fill="#f0ece6" d="M318.5 111.3 L322.0 102.4 L327.4 104.1 L333.6 111.3 L337.2 105.0 L336.7 99.7 L339.8 100.6 L340.7 107.7 L347.8 108.6 L346.0 116.6 L335.4 118.4 L330.0 121.9 L326.5 120.2 L329.1 116.6 L319.4 115.7Z"/>
<path fill="#f0ece6" d="M351.4 100.6 L356.7 107.7 L359.4 100.6 L365.6 100.1 L368.3 107.7 L366.5 115.7 L362.1 116.6 L360.3 111.3 L354.9 109.5Z"/>
<path fill="#f0ece6" d="M347.8 68.6 L351.4 66.3 L359.4 73.0 L362.9 77.5 L363.8 84.6 L360.3 85.0 L354.9 80.1 L350.5 78.3 L353.2 74.8Z"/>
<path fill="#f0ece6" d="M367.0 75.7 L369.2 73.9 L373.6 78.3 L373.6 84.6 L370.1 85.0Z"/>
<path fill="#f0ece6" d="M372.7 86.8 L379.0 86.8 L379.0 89.9 L372.7 89.9Z"/>
<path fill="#f0ece6" d="M384.7 89.0 L387.9 89.0 L387.9 92.6 L384.7 92.6Z"/>
<path fill="#f0ece6" d="M371.8 113.0 L376.3 111.3 L379.0 118.4 L373.6 119.3Z"/>
<path fill="#f0ece6" d="M299.8 123.7 L306.9 121.9 L317.6 125.5 L321.1 130.8 L323.8 136.2 L320.3 139.7 L314.0 138.8 L309.6 145.1 L305.1 149.5 L298.0 145.1 L297.1 140.6Z"/>
<path fill="#f0ece6" d="M356.7 136.2 L362.1 132.6 L360.3 129.0 L366.5 126.4 L369.2 127.3 L368.3 136.2 L370.1 140.6 L367.4 147.7 L363.8 148.6 L358.5 140.6Z"/>
<path fill="#f0ece6" d="M374.5 127.3 L385.2 126.4 L386.1 129.0 L381.6 136.2 L377.2 138.8 L376.3 145.1 L379.9 155.0 L371.0 155.0 L374.5 143.3 L373.6 137.9Z"/>
<path fill="#efe9e2" d="M672.0 326.7 L693.7 323.5 L709.0 313.7 L737.2 309.3 L763.3 322.4 L785.0 333.3 L796.3 345.2 L778.5 344.1 L765.5 342.0 L756.8 343.0 L754.6 347.4 L767.7 351.7 L772.0 357.8 L754.6 372.4 L737.2 378.9 L728.5 381.1 L715.5 361.5 L706.8 344.1 L672.0 335.4Z"/>
<path fill="#efe9e2" d="M806.8 298.5 L828.5 285.4 L867.7 282.2 L902.4 287.6 L889.4 307.2 L867.7 318.0 L859.0 326.7 L841.6 330.0 L824.2 327.8 L811.1 322.4 L802.4 309.3Z"/>
<path fill="#efe9e2" d="M577.0 376.1 L575.9 357.6 L582.4 344.6 L591.1 338.0 L595.5 329.3 L599.8 325.0 L615.0 329.3 L654.2 331.5 L669.4 333.7 L686.8 333.7 L710.7 331.5 L708.5 342.4 L719.4 368.5 L723.7 375.0 L697.7 377.2 L675.9 375.0 L632.4 372.8 L599.8 370.7Z"/>
<path fill="#efe9e2" d="M911.6 476.7 L930.7 464.8 L923.9 469.0 L931.8 465.1 L943.6 464.1 L955.5 466.1 L971.3 468.0 L983.2 472.0 L991.1 477.9 L993.1 491.8 L991.1 503.6 L979.2 511.5 L971.3 507.6 L963.4 503.6 L951.5 501.6 L939.7 503.6 L927.8 505.6 L917.9 507.6 L918.7 506.1 L915.0 496.3Z"/>
<path fill="#75cff0" d="M302.1 185.9 L310.7 181.6 L315.0 185.9 L305.0 193.1Z"/>
<path fill="#75cff0" d="M320.8 214.6 L325.1 210.3 L327.9 213.2 L322.2 216.7Z"/>
<path fill="#75cff0" d="M385.7 277.4 L398.7 273.0 L405.3 277.4 L392.2 281.7Z"/>
<path fill="#75cff0" d="M394.4 281.7 L398.7 279.6 L399.8 294.8 L395.5 292.6Z"/>
<path fill="#75cff0" d="M403.1 281.7 L407.4 283.9 L411.8 290.4 L406.3 292.6Z"/>
<path fill="#75cff0" d="M405.3 297.0 L414.0 294.8 L411.8 298.0 L407.4 299.1Z"/>
<path fill="#75cff0" d="M364.0 251.3 L368.3 253.5 L368.3 257.8 L365.0 256.7Z"/>
<path fill="#75cff0" d="M324.8 330.7 L328.1 331.7 L337.9 351.3 L334.6 351.3Z"/>
<path fill="#75cff0" d="M385.2 41.6 L401.0 48.0 L416.7 43.0 L415.3 47.3 L402.4 53.0 L390.9 48.7Z"/>
<path fill="#75cff0" d="M691.1 293.3 L697.7 282.4 L710.7 282.4 L715.0 278.0 L719.4 291.1 L725.9 295.4 L723.7 299.8 L710.7 299.8 L693.3 299.8Z"/>
<path fill="#75cff0" d="M741.1 286.7 L749.8 280.2 L756.3 280.2 L752.0 286.7 L758.5 297.6 L756.3 308.5 L747.7 312.8 L744.4 304.1Z"/>
<path fill="#75cff0" d="M706.3 341.3 L710.7 339.1 L717.2 353.3 L723.7 366.3 L730.3 379.3 L728.1 382.6 L719.4 372.8 L712.9 359.8Z"/>
<path fill="#75cff0" d="M743.3 335.9 L747.7 333.7 L754.2 342.4 L762.9 348.9 L771.6 356.5 L765.0 351.1 L756.3 351.1 L749.8 344.6Z"/>
<path fill="#75cff0" d="M700.9 416.3 L705.3 415.2 L706.3 419.6 L702.0 421.7Z"/>
<path fill="#75cff0" d="M899.2 243.7 L902.0 242.4 L898.1 251.7 L894.2 255.4 L895.0 251.5Z"/>
<path fill="#75cff0" d="M693.7 214.8 L699.2 212.6 L703.5 217.0 L700.3 221.3 L695.5 220.2Z"/>
<path fill="#75cff0" d="M640.3 237.8 L638.3 230.9 L646.2 229.0 L651.1 234.9 L651.1 239.8 L657.1 239.8 L661.0 233.9 L662.0 229.0 L666.0 225.0 L665.0 223.7 L667.2 210.7 L675.9 197.6 L680.3 190.0 L684.6 193.3 L680.3 202.0 L673.7 209.6 L673.7 219.3 L677.0 222.6 L692.2 220.4 L693.3 223.7 L680.3 228.0 L681.8 225.0 L680.8 233.4 L675.4 234.4 L673.9 239.8 L670.9 246.2 L657.1 250.2 L646.2 248.7 L650.2 244.8 L645.2 242.8 L645.2 234.9Z"/>
<path fill="#75cff0" d="M604.7 316.9 L617.6 304.0 L618.6 300.1 L626.5 294.1 L634.4 290.2 L641.3 288.2 L647.2 294.1 L655.1 300.1 L660.0 304.0 L662.0 307.0 L664.0 302.1 L659.1 297.1 L653.1 292.2 L650.2 284.3 L659.1 288.2 L667.9 294.1 L668.9 300.1 L675.8 311.9 L679.8 310.0 L678.8 304.0 L680.8 300.1 L686.7 300.1 L688.7 307.0 L694.6 313.9 L708.5 315.0 L710.7 325.9 L702.0 331.3 L673.7 332.4 L665.0 328.0 L649.8 325.9 L643.3 317.2 L623.7 315.0 L608.5 320.4Z"/>
<path fill="#e6ebc7" d="M641.3 294.1 L643.0 294.1 L643.7 305.0 L641.3 305.0Z"/>
<path fill="#e6ebc7" d="M652.1 310.0 L658.1 309.8 L657.1 312.9 L653.1 312.4Z"/>
<path fill="#e6ebc7" d="M603.2 233.9 L608.7 229.0 L611.6 232.9 L612.6 240.8 L617.6 250.7 L622.5 256.6 L620.5 261.6 L607.7 264.5 L608.7 254.6 L606.7 244.8 L603.7 237.8Z"/>
<path fill="#e6ebc7" d="M594.3 249.7 L599.8 244.8 L603.7 246.7 L602.7 256.6 L594.8 259.6Z"/>
</g>
<g transform="translate(0 0)">
<path fill="#e6ebc7" d="M192.0 170.0 L198.7 163.0 L209.6 155.4 L217.2 150.7 L223.7 153.3 L242.2 158.3 L254.2 160.9 L266.1 167.4 L274.8 163.0 L291.1 158.3 L298.7 162.6 L311.8 164.1 L323.6 170.2 L325.1 174.5 L339.4 174.5 L345.1 168.7 L355.2 174.5 L362.3 173.0 L368.1 163.0 L372.4 173.0 L376.7 171.6 L381.0 177.3 L391.0 180.2 L394.6 177.6 L401.5 161.8 L408.4 159.8 L409.4 178.6 L401.5 186.5 L410.4 200.3 L398.6 202.3 L386.7 204.3 L376.8 214.2 L375.8 226.0 L383.5 238.3 L403.1 247.0 L411.8 260.0 L416.1 253.5 L422.7 236.1 L418.3 223.0 L418.3 214.2 L418.3 209.2 L431.2 209.2 L439.1 218.1 L446.0 230.0 L452.9 222.1 L460.8 233.9 L464.8 245.0 L473.7 254.6 L472.7 262.2 L464.0 264.3 L457.4 268.7 L444.4 270.9 L464.0 275.2 L461.8 281.7 L450.9 286.1 L444.4 286.1 L437.9 294.8 L427.0 301.3 L424.8 312.2 L422.7 318.7 L414.0 327.4 L410.7 335.0 L412.9 347.0 L408.5 343.7 L405.3 335.0 L394.4 333.9 L383.5 336.1 L372.7 339.3 L368.3 347.0 L368.3 360.0 L372.7 366.5 L384.6 366.5 L386.8 360.0 L393.3 360.0 L391.1 375.2 L396.6 381.7 L407.4 390.4 L416.1 393.7 L414.0 397.0 L405.3 392.6 L394.4 383.9 L385.7 377.4 L372.7 373.0 L361.8 368.7 L350.9 363.3 L347.7 357.8 L342.2 351.3 L336.8 353.5 L329.2 342.6 L322.7 331.7 L316.1 323.0 L305.3 312.2 L302.0 303.5 L299.8 281.7 L298.7 270.9 L290.0 260.0 L281.3 249.1 L272.7 233.9 L264.0 223.0 L253.1 215.4 L242.2 217.6 L231.3 219.8 L227.0 227.4 L220.5 233.9 L209.6 240.4 L202.0 244.8 L205.3 241.5 L216.1 231.7 L222.7 225.2 L211.8 223.0 L203.1 218.7 L192.2 218.7 L190.0 210.0 L194.4 215.2 L192.2 200.0 L194.4 191.3 L190.0 184.8Z"/>
<path fill="#f0ece6" d="M388.1 132.9 L399.6 130.0 L419.7 131.5 L428.3 145.8 L434.0 148.7 L445.5 160.1 L445.5 170.2 L459.8 183.1 L458.4 191.7 L448.3 187.4 L452.6 206.0 L446.9 210.3 L434.0 204.6 L419.7 194.5 L424.0 188.8 L431.1 180.2 L424.0 170.2 L412.5 161.6 L403.9 163.0 L398.2 154.4 L391.0 151.5 L388.1 141.5Z"/>
<path fill="#f0ece6" d="M316.5 134.3 L322.2 131.5 L323.6 137.2 L333.7 135.8 L342.3 134.3 L348.0 131.5 L349.4 140.1 L348.0 150.1 L358.0 160.1 L353.7 167.3 L342.3 167.3 L329.4 170.2 L319.3 160.1 L329.4 157.3 L317.9 151.5 L313.6 142.9Z"/>
<path fill="#f0ece6" d="M373.8 127.2 L383.8 127.2 L383.8 137.2 L376.7 138.6 L375.2 144.4 L379.5 155.8 L376.7 163.0 L370.9 160.1 L372.4 145.8 L375.2 137.2Z"/>
<path fill="#f0ece6" d="M389.6 155.8 L399.6 163.0 L403.9 174.5 L399.6 180.2 L391.0 174.5 L388.1 163.0Z"/>
<path fill="#f0ece6" d="M383.8 30.1 L396.7 21.5 L399.5 15.0 L411.0 7.2 L426.8 0.7 L446.8 5.7 L461.2 17.2 L452.6 33.7 L439.7 43.0 L431.1 60.2 L423.9 65.9 L425.3 77.4 L416.7 91.7 L418.2 100.3 L411.0 103.2 L401.0 98.9 L393.8 86.0 L382.3 80.3 L372.3 60.2 L373.7 47.3 L378.0 37.3Z"/>
<path fill="#f0ece6" d="M370.9 97.5 L379.5 100.3 L385.2 103.2 L401.0 108.9 L406.7 108.9 L413.9 111.8 L412.4 120.4 L396.7 120.4 L385.2 120.4 L382.3 114.7 L380.9 106.1 L372.3 100.3Z"/>
<path fill="#e6ebc7" d="M403.1 355.7 L411.8 356.7 L424.8 360.4 L425.9 362.6 L416.1 361.7 L407.4 359.6Z"/>
<path fill="#e6ebc7" d="M431.8 363.9 L440.5 364.3 L440.9 367.0 L433.1 367.4Z"/>
<path fill="#f0ece6" d="M504.2 0.0 L554.2 0.0 L565.0 8.7 L565.0 16.3 L554.2 19.6 L536.8 28.3 L549.8 26.1 L558.5 23.9 L562.9 32.6 L564.0 41.3 L571.6 32.6 L584.6 28.3 L587.9 37.0 L580.3 45.7 L575.9 52.2 L571.6 56.5 L569.4 65.2 L565.0 73.9 L567.2 87.0 L571.6 95.7 L565.0 100.0 L569.4 113.0 L567.2 123.9 L562.9 134.8 L562.9 152.2 L558.5 163.0 L543.3 171.7 L532.4 176.1 L528.1 187.0 L515.0 191.3 L510.7 206.5 L505.9 221.7 L497.7 213.0 L489.0 195.7 L483.5 178.3 L482.4 165.2 L478.1 152.2 L475.9 134.8 L471.6 113.0 L465.0 106.5 L456.3 103.3 L443.3 104.3 L437.9 95.7 L447.7 89.1 L434.6 82.6 L441.1 73.9 L450.9 67.4 L453.1 58.7 L446.6 52.2 L456.3 40.2 L460.7 39.1 L461.8 26.1 L473.7 19.6 L482.4 18.5 L486.8 28.3 L487.9 15.2 L502.0 28.3 L497.7 13.0 L504.2 -4.3Z"/>
<path fill="#e6ebc7" d="M558.5 187.0 L573.7 187.0 L582.4 184.8 L583.5 193.5 L573.7 201.1 L564.0 200.0 L558.5 191.3Z"/>
<path fill="#f0ece6" d="M647.7 60.9 L660.7 58.7 L666.1 54.3 L678.1 52.2 L686.8 56.5 L684.6 65.2 L673.7 65.2 L671.6 71.7 L679.2 87.0 L673.7 89.1 L671.6 82.6 L665.0 80.4 L661.8 98.9 L655.3 91.3 L649.8 78.3 L647.7 65.2Z"/>
<path fill="#e6ebc7" d="M636.7 230.0 L633.7 226.1 L632.3 212.2 L641.7 202.3 L643.6 200.4 L649.6 193.4 L653.5 181.6 L659.4 174.7 L657.5 169.7 L662.4 168.7 L663.4 163.8 L667.4 159.8 L672.3 158.8 L677.2 154.9 L683.2 152.9 L691.1 151.9 L697.0 156.9 L696.0 160.8 L702.0 161.8 L703.9 164.8 L712.8 167.7 L723.7 176.6 L723.7 184.5 L720.7 185.5 L711.8 184.5 L705.9 183.6 L707.9 187.5 L707.9 195.4 L714.8 200.4 L716.8 198.4 L713.8 195.4 L720.7 195.4 L721.7 190.5 L728.6 185.5 L732.0 185.5 L732.9 180.4 L732.9 171.7 L737.2 171.7 L737.2 180.4 L741.6 178.3 L756.8 169.6 L772.0 163.0 L774.2 158.7 L778.5 165.2 L791.6 167.4 L795.9 169.6 L797.0 141.3 L804.6 139.1 L805.7 152.2 L802.4 184.8 L809.0 173.9 L811.1 167.4 L813.3 152.2 L815.5 139.1 L824.2 143.5 L830.7 145.7 L826.3 130.4 L839.4 128.3 L841.6 119.6 L861.1 106.5 L874.2 104.3 L885.0 89.1 L893.7 100.0 L906.8 100.0 L911.1 108.7 L906.8 121.7 L895.9 132.6 L904.6 128.3 L922.0 132.6 L937.2 130.4 L950.3 132.6 L952.4 150.0 L961.1 147.8 L978.5 147.8 L980.7 139.1 L1000.3 143.5 L1010.7 147.8 L1017.2 152.2 L1028.1 152.2 L1032.4 156.5 L1045.5 160.9 L1052.0 160.9 L1054.2 167.4 L1057.4 160.9 L1073.7 165.2 L1082.4 171.7 L1093.3 180.4 L1104.2 182.6 L1106.3 187.0 L1095.5 191.3 L1082.4 187.0 L1078.1 195.7 L1067.2 206.5 L1058.5 220.0 L1078.5 205.0 L1069.8 211.5 L1059.0 218.0 L1052.4 220.2 L1045.9 222.4 L1039.4 228.9 L1037.2 242.0 L1032.9 250.7 L1026.3 260.4 L1020.9 255.0 L1018.7 239.8 L1026.3 228.9 L1035.0 218.0 L1039.4 209.3 L1030.7 213.7 L1026.3 218.0 L1019.8 218.0 L1013.3 224.6 L1004.6 224.6 L987.2 224.6 L978.5 233.3 L967.7 246.3 L974.2 250.7 L980.7 255.0 L982.9 265.9 L976.3 278.9 L969.8 287.6 L956.6 293.0 L952.2 298.5 L946.8 302.8 L949.0 308.3 L951.1 313.7 L950.6 319.1 L944.6 320.2 L942.4 311.5 L940.3 306.1 L932.7 303.9 L930.5 300.7 L922.9 307.2 L927.2 310.4 L931.6 311.5 L926.1 320.2 L931.6 335.4 L927.2 345.2 L922.0 355.0 L909.0 361.5 L898.1 359.3 L891.6 365.9 L898.1 376.7 L891.6 389.8 L880.7 392.0 L876.3 381.1 L872.0 365.9 L865.5 359.3 L928.5 346.3 L917.7 355.0 L904.6 358.3 L895.9 363.7 L891.6 370.2 L893.7 376.7 L898.1 383.3 L899.3 377.4 L890.4 392.2 L880.6 384.3 L875.6 381.3 L874.6 384.3 L875.6 393.2 L878.6 400.1 L882.0 406.0 L885.7 411.1 L883.5 404.0 L877.6 398.1 L873.6 393.2 L873.2 384.3 L871.7 376.4 L868.7 372.4 L862.8 373.4 L859.8 366.5 L853.9 356.6 L844.0 357.6 L839.4 364.8 L830.7 370.2 L824.2 376.7 L820.9 387.6 L818.1 394.1 L813.3 385.4 L809.0 370.2 L806.8 359.3 L802.4 353.9 L795.9 352.8 L789.4 346.3 L778.5 343.0 L765.5 340.9 L756.8 342.0 L754.6 346.3 L767.7 350.7 L772.0 357.2 L765.0 366.3 L752.0 375.0 L741.1 379.3 L730.3 381.5 L732.4 383.7 L741.1 388.0 L749.8 385.9 L747.7 394.6 L741.1 403.3 L732.4 412.0 L723.7 420.7 L719.4 429.3 L721.6 440.2 L722.7 455.4 L717.2 459.8 L710.7 466.3 L708.5 477.2 L702.0 485.9 L695.5 498.9 L686.8 507.6 L669.4 509.8 L665.0 501.1 L658.5 490.2 L656.3 475.0 L649.8 462.0 L652.0 448.9 L654.2 440.2 L649.8 427.2 L643.3 416.3 L641.1 405.4 L632.4 403.3 L619.4 401.1 L599.8 403.3 L591.1 396.7 L582.4 385.9 L575.9 377.2 L578.1 368.5 L575.9 357.6 L582.4 344.6 L591.1 338.0 L595.5 329.3 L599.8 325.0 L584.6 345.4 L595.5 334.6 L599.8 323.7 L606.3 321.5 L597.7 308.5 L595.5 293.3 L604.2 291.1 L615.0 288.9 L615.0 278.0 L609.6 273.7 L617.2 267.2 L623.7 260.7 L632.4 254.1 L643.3 245.4 L644.4 236.7 L634.6 228.0Z"/>
<path fill="#f0ece6" d="M752.4 143.5 L761.1 130.4 L767.7 115.2 L776.3 106.5 L791.6 97.8 L795.9 102.2 L782.9 108.7 L769.8 121.7 L761.1 139.1 L765.5 154.3 L756.8 152.2 L752.4 147.8Z"/>
<path fill="#f0ece6" d="M854.6 56.5 L861.1 39.1 L867.7 41.3 L874.2 60.9 L876.3 71.7 L887.2 69.6 L889.4 78.3 L876.3 82.6 L872.0 71.7 L861.1 69.6 L854.6 58.7Z"/>
<path fill="#e6ebc7" d="M972.0 108.7 L989.4 106.5 L991.6 115.2 L976.3 119.6Z"/>
<path fill="#e6ebc7" d="M995.9 113.0 L1004.6 117.4 L1000.3 118.5Z"/>
<path fill="#f0ece6" d="M759.0 43.5 L767.7 32.6 L785.0 39.1 L785.0 45.7 L774.2 50.0 L765.5 54.3 L759.0 47.8Z"/>
<path fill="#f0ece6" d="M737.2 45.7 L750.3 43.5 L741.6 53.3Z"/>
<path fill="#e6ebc7" d="M1078.1 150.0 L1086.8 149.6 L1087.2 152.6 L1079.2 152.6Z"/>
<path fill="#e6ebc7" d="M824.2 392.0 L828.5 394.1 L828.5 398.5 L825.3 398.5Z"/>
<path fill="#e6ebc7" d="M731.8 461.5 L739.4 452.8 L745.9 448.5 L748.1 455.0 L743.7 470.2 L739.4 481.1 L730.7 481.1 L730.7 470.2Z"/>
<path fill="#e6ebc7" d="M864.4 402.8 L872.0 405.0 L882.9 418.0 L890.5 428.9 L887.2 431.1 L878.5 426.7 L869.8 413.7 L863.3 407.2Z"/>
<path fill="#e6ebc7" d="M891.6 432.2 L900.3 433.3 L911.1 435.4 L913.3 437.6 L902.4 437.6 L893.7 435.4Z"/>
<path fill="#e6ebc7" d="M900.3 411.5 L911.1 405.0 L919.8 398.5 L924.2 407.2 L917.7 418.0 L911.1 424.6 L902.4 420.2Z"/>
<path fill="#e6ebc7" d="M926.3 411.5 L937.2 411.5 L930.7 418.0 L932.9 426.7 L928.5 428.9 L926.3 422.4 L924.2 415.9Z"/>
<path fill="#e6ebc7" d="M928.1 348.5 L933.3 349.6 L930.7 357.2 L928.1 355.0Z"/>
<path fill="#e6ebc7" d="M928.1 368.0 L933.3 369.1 L934.0 381.1 L929.6 380.0Z"/>
<path fill="#e6ebc7" d="M932.8 387.0 L943.2 386.2 L944.7 393.7 L943.2 402.6 L937.2 403.4 L934.3 396.7Z"/>
<path fill="#e6ebc7" d="M913.3 472.4 L930.7 461.5 L939.4 452.8 L952.4 448.5 L963.3 446.3 L969.8 455.0 L980.7 455.0 L985.0 446.3 L991.6 459.3 L1000.3 468.0 L1011.1 478.9 L1013.3 492.0 L1006.8 507.2 L1002.4 520.2 L989.4 522.4 L978.5 513.7 L965.5 507.2 L956.8 505.0 L945.9 500.7 L932.9 505.0 L919.8 507.2 L915.5 500.7 L911.1 478.9Z"/>
<path fill="#e6ebc7" d="M412.0 392.3 L418.8 391.1 L425.6 387.7 L434.7 384.3 L441.5 386.6 L457.5 387.7 L471.1 394.5 L484.7 401.4 L489.3 412.7 L500.6 417.3 L516.5 424.1 L527.9 430.9 L527.9 437.7 L521.1 444.5 L516.5 453.6 L516.5 469.5 L509.7 476.4 L493.8 483.2 L493.8 492.3 L484.7 501.4 L480.2 510.5 L471.1 512.7 L471.1 519.5 L462.0 524.1 L457.5 528.6 L452.9 530.9 L452.9 537.7 L448.4 544.5 L448.4 553.6 L441.5 560.5 L441.5 574.1 L448.4 583.2 L441.5 586.6 L434.7 583.2 L427.9 574.1 L425.6 560.5 L427.9 546.8 L430.2 533.2 L430.2 524.1 L434.7 505.9 L435.9 492.3 L437.0 478.6 L439.3 467.3 L430.2 460.5 L421.1 451.4 L414.3 442.3 L409.7 433.2 L412.0 424.1 L414.3 415.0 L418.8 405.9 L416.5 399.1 L414.3 394.5 L407.5 391.1Z"/>
<path fill="#f0ece6" d="M0.0 649.1 L22.9 647.2 L45.9 647.2 L68.8 652.9 L76.4 658.6 L91.7 659.8 L91.7 668.2 L0.0 668.2Z"/>
<path fill="#f0ece6" d="M443.3 668.2 L443.3 652.9 L454.8 635.7 L470.0 628.1 L471.9 631.9 L462.4 641.4 L462.4 668.2Z"/>
<path fill="#f0ece6" d="M724.9 660.5 L736.4 654.8 L751.6 645.2 L759.3 643.3 L766.9 649.1 L782.2 653.7 L797.5 656.0 L799.4 660.5 L820.4 660.5 L835.7 647.2 L851.0 645.2 L866.3 639.5 L873.9 641.4 L885.4 645.2 L900.7 647.2 L908.3 643.3 L916.0 647.2 L927.4 647.2 L942.7 646.0 L954.2 647.2 L961.8 644.1 L980.9 647.2 L996.2 652.9 L1003.9 660.5 L1011.5 660.5 L1019.1 658.6 L1023.0 668.2 L724.9 668.2Z"/>
<path fill="#e6ebc7" d="M982.5 254.9 L985.5 252.4 L987.5 254.9 L988.5 267.7 L985.5 270.7 L985.5 279.6 L984.0 279.6 L983.5 269.7 L981.5 259.8Z"/>
<path fill="#e6ebc7" d="M979.6 295.4 L983.5 285.5 L988.5 288.5 L991.4 291.5 L989.4 294.4 L985.5 294.4 L981.5 293.4Z"/>
<path fill="#e6ebc7" d="M978.6 299.9 L983.0 299.9 L984.0 308.3 L982.5 315.2 L975.6 318.6 L968.7 322.1 L961.8 325.1 L958.3 329.0 L953.4 327.0 L955.8 320.1 L962.8 315.7 L970.7 312.7 L975.6 307.3Z"/>
<path fill="#e6ebc7" d="M952.9 325.6 L957.3 325.6 L956.8 330.5 L953.7 330.5Z"/>
<path fill="#e6ebc7" d="M991.1 531.3 L999.0 531.3 L998.0 538.2 L993.1 538.2Z"/>
<path fill="#e6ebc7" d="M1065.2 513.5 L1070.2 519.4 L1076.1 521.4 L1070.2 531.3 L1068.2 523.4 L1066.2 517.5Z"/>
<path fill="#e6ebc7" d="M1062.3 531.3 L1066.2 533.3 L1062.3 541.2 L1054.4 549.1 L1050.4 551.1 L1048.4 545.1 L1056.3 539.2Z"/>
<path fill="#e6ebc7" d="M957.5 416.6 L963.4 418.6 L977.2 422.6 L987.1 424.5 L995.0 432.5 L1004.9 442.3 L995.0 440.4 L981.2 436.4 L973.3 432.5 L967.4 424.5 L959.5 420.6Z"/>
<path fill="#e6ebc7" d="M463.1 569.5 L468.8 569.1 L469.3 571.8 L463.8 572.3Z"/>
<path fill="#f0ece6" d="M304.2 102.4 L311.4 93.5 L319.4 90.4 L321.1 91.7 L319.4 102.4 L312.2 106.8 L304.2 106.8Z"/>
<path fill="#f0ece6" d="M330.0 77.5 L335.4 74.8 L338.0 77.5 L335.4 80.1 L330.5 79.7Z"/>
<path fill="#f0ece6" d="M324.7 84.1 L335.4 82.8 L335.4 89.9 L330.9 90.8Z"/>
<path fill="#f0ece6" d="M318.5 111.3 L322.0 102.4 L327.4 104.1 L333.6 111.3 L337.2 105.0 L336.7 99.7 L339.8 100.6 L340.7 107.7 L347.8 108.6 L346.0 116.6 L335.4 118.4 L330.0 121.9 L326.5 120.2 L329.1 116.6 L319.4 115.7Z"/>
<path fill="#f0ece6" d="M351.4 100.6 L356.7 107.7 L359.4 100.6 L365.6 100.1 L368.3 107.7 L366.5 115.7 L362.1 116.6 L360.3 111.3 L354.9 109.5Z"/>
<path fill="#f0ece6" d="M347.8 68.6 L351.4 66.3 L359.4 73.0 L362.9 77.5 L363.8 84.6 L360.3 85.0 L354.9 80.1 L350.5 78.3 L353.2 74.8Z"/>
<path fill="#f0ece6" d="M367.0 75.7 L369.2 73.9 L373.6 78.3 L373.6 84.6 L370.1 85.0Z"/>
<path fill="#f0ece6" d="M372.7 86.8 L379.0 86.8 L379.0 89.9 L372.7 89.9Z"/>
<path fill="#f0ece6" d="M384.7 89.0 L387.9 89.0 L387.9 92.6 L384.7 92.6Z"/>
<path fill="#f0ece6" d="M371.8 113.0 L376.3 111.3 L379.0 118.4 L373.6 119.3Z"/>
<path fill="#f0ece6" d="M299.8 123.7 L306.9 121.9 L317.6 125.5 L321.1 130.8 L323.8 136.2 L320.3 139.7 L314.0 138.8 L309.6 145.1 L305.1 149.5 L298.0 145.1 L297.1 140.6Z"/>
<path fill="#f0ece6" d="M356.7 136.2 L362.1 132.6 L360.3 129.0 L366.5 126.4 L369.2 127.3 L368.3 136.2 L370.1 140.6 L367.4 147.7 L363.8 148.6 L358.5 140.6Z"/>
<path fill="#f0ece6" d="M374.5 127.3 L385.2 126.4 L386.1 129.0 L381.6 136.2 L377.2 138.8 L376.3 145.1 L379.9 155.0 L371.0 155.0 L374.5 143.3 L373.6 137.9Z"/>
<path fill="#efe9e2" d="M672.0 326.7 L693.7 323.5 L709.0 313.7 L737.2 309.3 L763.3 322.4 L785.0 333.3 L796.3 345.2 L778.5 344.1 L765.5 342.0 L756.8 343.0 L754.6 347.4 L767.7 351.7 L772.0 357.8 L754.6 372.4 L737.2 378.9 L728.5 381.1 L715.5 361.5 L706.8 344.1 L672.0 335.4Z"/>
<path fill="#efe9e2" d="M806.8 298.5 L828.5 285.4 L867.7 282.2 L902.4 287.6 L889.4 307.2 L867.7 318.0 L859.0 326.7 L841.6 330.0 L824.2 327.8 L811.1 322.4 L802.4 309.3Z"/>
<path fill="#efe9e2" d="M577.0 376.1 L575.9 357.6 L582.4 344.6 L591.1 338.0 L595.5 329.3 L599.8 325.0 L615.0 329.3 L654.2 331.5 L669.4 333.7 L686.8 333.7 L710.7 331.5 L708.5 342.4 L719.4 368.5 L723.7 375.0 L697.7 377.2 L675.9 375.0 L632.4 372.8 L599.8 370.7Z"/>
<path fill="#efe9e2" d="M911.6 476.7 L930.7 464.8 L923.9 469.0 L931.8 465.1 L943.6 464.1 L955.5 466.1 L971.3 468.0 L983.2 472.0 L991.1 477.9 L993.1 491.8 L991.1 503.6 L979.2 511.5 L971.3 507.6 L963.4 503.6 L951.5 501.6 L939.7 503.6 L927.8 505.6 L917.9 507.6 L918.7 506.1 L915.0 496.3Z"/>
<path fill="#75cff0" d="M302.1 185.9 L310.7 181.6 L315.0 185.9 L305.0 193.1Z"/>
<path fill="#75cff0" d="M320.8 214.6 L325.1 210.3 L327.9 213.2 L322.2 216.7Z"/>
<path fill="#75cff0" d="M385.7 277.4 L398.7 273.0 L405.3 277.4 L392.2 281.7Z"/>
<path fill="#75cff0" d="M394.4 281.7 L398.7 279.6 L399.8 294.8 L395.5 292.6Z"/>
<path fill="#75cff0" d="M403.1 281.7 L407.4 283.9 L411.8 290.4 L406.3 292.6Z"/>
<path fill="#75cff0" d="M405.3 297.0 L414.0 294.8 L411.8 298.0 L407.4 299.1Z"/>
<path fill="#75cff0" d="M364.0 251.3 L368.3 253.5 L368.3 257.8 L365.0 256.7Z"/>
<path fill="#75cff0" d="M324.8 330.7 L328.1 331.7 L337.9 351.3 L334.6 351.3Z"/>
<path fill="#75cff0" d="M385.2 41.6 L401.0 48.0 L416.7 43.0 L415.3 47.3 L402.4 53.0 L390.9 48.7Z"/>
<path fill="#75cff0" d="M691.1 293.3 L697.7 282.4 L710.7 282.4 L715.0 278.0 L719.4 291.1 L725.9 295.4 L723.7 299.8 L710.7 299.8 L693.3 299.8Z"/>
<path fill="#75cff0" d="M741.1 286.7 L749.8 280.2 L756.3 280.2 L752.0 286.7 L758.5 297.6 L756.3 308.5 L747.7 312.8 L744.4 304.1Z"/>
<path fill="#75cff0" d="M706.3 341.3 L710.7 339.1 L717.2 353.3 L723.7 366.3 L730.3 379.3 L728.1 382.6 L719.4 372.8 L712.9 359.8Z"/>
<path fill="#75cff0" d="M743.3 335.9 L747.7 333.7 L754.2 342.4 L762.9 348.9 L771.6 356.5 L765.0 351.1 L756.3 351.1 L749.8 344.6Z"/>
<path fill="#75cff0" d="M700.9 416.3 L705.3 415.2 L706.3 419.6 L702.0 421.7Z"/>
<path fill="#75cff0" d="M899.2 243.7 L902.0 242.4 L898.1 251.7 L894.2 255.4 L895.0 251.5Z"/>
<path fill="#75cff0" d="M693.7 214.8 L699.2 212.6 L703.5 217.0 L700.3 221.3 L695.5 220.2Z"/>
<path fill="#75cff0" d="M640.3 237.8 L638.3 230.9 L646.2 229.0 L651.1 234.9 L651.1 239.8 L657.1 239.8 L661.0 233.9 L662.0 229.0 L666.0 225.0 L665.0 223.7 L667.2 210.7 L675.9 197.6 L680.3 190.0 L684.6 193.3 L680.3 202.0 L673.7 209.6 L673.7 219.3 L677.0 222.6 L692.2 220.4 L693.3 223.7 L680.3 228.0 L681.8 225.0 L680.8 233.4 L675.4 234.4 L673.9 239.8 L670.9 246.2 L657.1 250.2 L646.2 248.7 L650.2 244.8 L645.2 242.8 L645.2 234.9Z"/>
<path fill="#75cff0" d="M604.7 316.9 L617.6 304.0 L618.6 300.1 L626.5 294.1 L634.4 290.2 L641.3 288.2 L647.2 294.1 L655.1 300.1 L660.0 304.0 L662.0 307.0 L664.0 302.1 L659.1 297.1 L653.1 292.2 L650.2 284.3 L659.1 288.2 L667.9 294.1 L668.9 300.1 L675.8 311.9 L679.8 310.0 L678.8 304.0 L680.8 300.1 L686.7 300.1 L688.7 307.0 L694.6 313.9 L708.5 315.0 L710.7 325.9 L702.0 331.3 L673.7 332.4 L665.0 328.0 L649.8 325.9 L643.3 317.2 L623.7 315.0 L608.5 320.4Z"/>
<path fill="#e6ebc7" d="M641.3 294.1 L643.0 294.1 L643.7 305.0 L641.3 305.0Z"/>
<path fill="#e6ebc7" d="M652.1 310.0 L658.1 309.8 L657.1 312.9 L653.1 312.4Z"/>
<path fill="#e6ebc7" d="M603.2 233.9 L608.7 229.0 L611.6 232.9 L612.6 240.8 L617.6 250.7 L622.5 256.6 L620.5 261.6 L607.7 264.5 L608.7 254.6 L606.7 244.8 L603.7 237.8Z"/>
<path fill="#e6ebc7" d="M594.3 249.7 L599.8 244.8 L603.7 246.7 L602.7 256.6 L594.8 259.6Z"/>
</g>
<g transform="translate(925 0)">
<path fill="#e6ebc7" d="M192.0 170.0 L198.7 163.0 L209.6 155.4 L217.2 150.7 L223.7 153.3 L242.2 158.3 L254.2 160.9 L266.1 167.4 L274.8 163.0 L291.1 158.3 L298.7 162.6 L311.8 164.1 L323.6 170.2 L325.1 174.5 L339.4 174.5 L345.1 168.7 L355.2 174.5 L362.3 173.0 L368.1 163.0 L372.4 173.0 L376.7 171.6 L381.0 177.3 L391.0 180.2 L394.6 177.6 L401.5 161.8 L408.4 159.8 L409.4 178.6 L401.5 186.5 L410.4 200.3 L398.6 202.3 L386.7 204.3 L376.8 214.2 L375.8 226.0 L383.5 238.3 L403.1 247.0 L411.8 260.0 L416.1 253.5 L422.7 236.1 L418.3 223.0 L418.3 214.2 L418.3 209.2 L431.2 209.2 L439.1 218.1 L446.0 230.0 L452.9 222.1 L460.8 233.9 L464.8 245.0 L473.7 254.6 L472.7 262.2 L464.0 264.3 L457.4 268.7 L444.4 270.9 L464.0 275.2 L461.8 281.7 L450.9 286.1 L444.4 286.1 L437.9 294.8 L427.0 301.3 L424.8 312.2 L422.7 318.7 L414.0 327.4 L410.7 335.0 L412.9 347.0 L408.5 343.7 L405.3 335.0 L394.4 333.9 L383.5 336.1 L372.7 339.3 L368.3 347.0 L368.3 360.0 L372.7 366.5 L384.6 366.5 L386.8 360.0 L393.3 360.0 L391.1 375.2 L396.6 381.7 L407.4 390.4 L416.1 393.7 L414.0 397.0 L405.3 392.6 L394.4 383.9 L385.7 377.4 L372.7 373.0 L361.8 368.7 L350.9 363.3 L347.7 357.8 L342.2 351.3 L336.8 353.5 L329.2 342.6 L322.7 331.7 L316.1 323.0 L305.3 312.2 L302.0 303.5 L299.8 281.7 L298.7 270.9 L290.0 260.0 L281.3 249.1 L272.7 233.9 L264.0 223.0 L253.1 215.4 L242.2 217.6 L231.3 219.8 L227.0 227.4 L220.5 233.9 L209.6 240.4 L202.0 244.8 L205.3 241.5 L216.1 231.7 L222.7 225.2 L211.8 223.0 L203.1 218.7 L192.2 218.7 L190.0 210.0 L194.4 215.2 L192.2 200.0 L194.4 191.3 L190.0 184.8Z"/>
<path fill="#f0ece6" d="M388.1 132.9 L399.6 130.0 L419.7 131.5 L428.3 145.8 L434.0 148.7 L445.5 160.1 L445.5 170.2 L459.8 183.1 L458.4 191.7 L448.3 187.4 L452.6 206.0 L446.9 210.3 L434.0 204.6 L419.7 194.5 L424.0 188.8 L431.1 180.2 L424.0 170.2 L412.5 161.6 L403.9 163.0 L398.2 154.4 L391.0 151.5 L388.1 141.5Z"/>
<path fill="#f0ece6" d="M316.5 134.3 L322.2 131.5 L323.6 137.2 L333.7 135.8 L342.3 134.3 L348.0 131.5 L349.4 140.1 L348.0 150.1 L358.0 160.1 L353.7 167.3 L342.3 167.3 L329.4 170.2 L319.3 160.1 L329.4 157.3 L317.9 151.5 L313.6 142.9Z"/>
<path fill="#f0ece6" d="M373.8 127.2 L383.8 127.2 L383.8 137.2 L376.7 138.6 L375.2 144.4 L379.5 155.8 L376.7 163.0 L370.9 160.1 L372.4 145.8 L375.2 137.2Z"/>
<path fill="#f0ece6" d="M389.6 155.8 L399.6 163.0 L403.9 174.5 L399.6 180.2 L391.0 174.5 L388.1 163.0Z"/>
<path fill="#f0ece6" d="M383.8 30.1 L396.7 21.5 L399.5 15.0 L411.0 7.2 L426.8 0.7 L446.8 5.7 L461.2 17.2 L452.6 33.7 L439.7 43.0 L431.1 60.2 L423.9 65.9 L425.3 77.4 L416.7 91.7 L418.2 100.3 L411.0 103.2 L401.0 98.9 L393.8 86.0 L382.3 80.3 L372.3 60.2 L373.7 47.3 L378.0 37.3Z"/>
<path fill="#f0ece6" d="M370.9 97.5 L379.5 100.3 L385.2 103.2 L401.0 108.9 L406.7 108.9 L413.9 111.8 L412.4 120.4 L396.7 120.4 L385.2 120.4 L382.3 114.7 L380.9 106.1 L372.3 100.3Z"/>
<path fill="#e6ebc7" d="M403.1 355.7 L411.8 356.7 L424.8 360.4 L425.9 362.6 L416.1 361.7 L407.4 359.6Z"/>
<path fill="#e6ebc7" d="M431.8 363.9 L440.5 364.3 L440.9 367.0 L433.1 367.4Z"/>
<path fill="#f0ece6" d="M504.2 0.0 L554.2 0.0 L565.0 8.7 L565.0 16.3 L554.2 19.6 L536.8 28.3 L549.8 26.1 L558.5 23.9 L562.9 32.6 L564.0 41.3 L571.6 32.6 L584.6 28.3 L587.9 37.0 L580.3 45.7 L575.9 52.2 L571.6 56.5 L569.4 65.2 L565.0 73.9 L567.2 87.0 L571.6 95.7 L565.0 100.0 L569.4 113.0 L567.2 123.9 L562.9 134.8 L562.9 152.2 L558.5 163.0 L543.3 171.7 L532.4 176.1 L528.1 187.0 L515.0 191.3 L510.7 206.5 L505.9 221.7 L497.7 213.0 L489.0 195.7 L483.5 178.3 L482.4 165.2 L478.1 152.2 L475.9 134.8 L471.6 113.0 L465.0 106.5 L456.3 103.3 L443.3 104.3 L437.9 95.7 L447.7 89.1 L434.6 82.6 L441.1 73.9 L450.9 67.4 L453.1 58.7 L446.6 52.2 L456.3 40.2 L460.7 39.1 L461.8 26.1 L473.7 19.6 L482.4 18.5 L486.8 28.3 L487.9 15.2 L502.0 28.3 L497.7 13.0 L504.2 -4.3Z"/>
<path fill="#e6ebc7" d="M558.5 187.0 L573.7 187.0 L582.4 184.8 L583.5 193.5 L573.7 201.1 L564.0 200.0 L558.5 191.3Z"/>
<path fill="#f0ece6" d="M647.7 60.9 L660.7 58.7 L666.1 54.3 L678.1 52.2 L686.8 56.5 L684.6 65.2 L673.7 65.2 L671.6 71.7 L679.2 87.0 L673.7 89.1 L671.6 82.6 L665.0 80.4 L661.8 98.9 L655.3 91.3 L649.8 78.3 L647.7 65.2Z"/>
<path fill="#e6ebc7" d="M636.7 230.0 L633.7 226.1 L632.3 212.2 L641.7 202.3 L643.6 200.4 L649.6 193.4 L653.5 181.6 L659.4 174.7 L657.5 169.7 L662.4 168.7 L663.4 163.8 L667.4 159.8 L672.3 158.8 L677.2 154.9 L683.2 152.9 L691.1 151.9 L697.0 156.9 L696.0 160.8 L702.0 161.8 L703.9 164.8 L712.8 167.7 L723.7 176.6 L723.7 184.5 L720.7 185.5 L711.8 184.5 L705.9 183.6 L707.9 187.5 L707.9 195.4 L714.8 200.4 L716.8 198.4 L713.8 195.4 L720.7 195.4 L721.7 190.5 L728.6 185.5 L732.0 185.5 L732.9 180.4 L732.9 171.7 L737.2 171.7 L737.2 180.4 L741.6 178.3 L756.8 169.6 L772.0 163.0 L774.2 158.7 L778.5 165.2 L791.6 167.4 L795.9 169.6 L797.0 141.3 L804.6 139.1 L805.7 152.2 L802.4 184.8 L809.0 173.9 L811.1 167.4 L813.3 152.2 L815.5 139.1 L824.2 143.5 L830.7 145.7 L826.3 130.4 L839.4 128.3 L841.6 119.6 L861.1 106.5 L874.2 104.3 L885.0 89.1 L893.7 100.0 L906.8 100.0 L911.1 108.7 L906.8 121.7 L895.9 132.6 L904.6 128.3 L922.0 132.6 L937.2 130.4 L950.3 132.6 L952.4 150.0 L961.1 147.8 L978.5 147.8 L980.7 139.1 L1000.3 143.5 L1010.7 147.8 L1017.2 152.2 L1028.1 152.2 L1032.4 156.5 L1045.5 160.9 L1052.0 160.9 L1054.2 167.4 L1057.4 160.9 L1073.7 165.2 L1082.4 171.7 L1093.3 180.4 L1104.2 182.6 L1106.3 187.0 L1095.5 191.3 L1082.4 187.0 L1078.1 195.7 L1067.2 206.5 L1058.5 220.0 L1078.5 205.0 L1069.8 211.5 L1059.0 218.0 L1052.4 220.2 L1045.9 222.4 L1039.4 228.9 L1037.2 242.0 L1032.9 250.7 L1026.3 260.4 L1020.9 255.0 L1018.7 239.8 L1026.3 228.9 L1035.0 218.0 L1039.4 209.3 L1030.7 213.7 L1026.3 218.0 L1019.8 218.0 L1013.3 224.6 L1004.6 224.6 L987.2 224.6 L978.5 233.3 L967.7 246.3 L974.2 250.7 L980.7 255.0 L982.9 265.9 L976.3 278.9 L969.8 287.6 L956.6 293.0 L952.2 298.5 L946.8 302.8 L949.0 308.3 L951.1 313.7 L950.6 319.1 L944.6 320.2 L942.4 311.5 L940.3 306.1 L932.7 303.9 L930.5 300.7 L922.9 307.2 L927.2 310.4 L931.6 311.5 L926.1 320.2 L931.6 335.4 L927.2 345.2 L922.0 355.0 L909.0 361.5 L898.1 359.3 L891.6 365.9 L898.1 376.7 L891.6 389.8 L880.7 392.0 L876.3 381.1 L872.0 365.9 L865.5 359.3 L928.5 346.3 L917.7 355.0 L904.6 358.3 L895.9 363.7 L891.6 370.2 L893.7 376.7 L898.1 383.3 L899.3 377.4 L890.4 392.2 L880.6 384.3 L875.6 381.3 L874.6 384.3 L875.6 393.2 L878.6 400.1 L882.0 406.0 L885.7 411.1 L883.5 404.0 L877.6 398.1 L873.6 393.2 L873.2 384.3 L871.7 376.4 L868.7 372.4 L862.8 373.4 L859.8 366.5 L853.9 356.6 L844.0 357.6 L839.4 364.8 L830.7 370.2 L824.2 376.7 L820.9 387.6 L818.1 394.1 L813.3 385.4 L809.0 370.2 L806.8 359.3 L802.4 353.9 L795.9 352.8 L789.4 346.3 L778.5 343.0 L765.5 340.9 L756.8 342.0 L754.6 346.3 L767.7 350.7 L772.0 357.2 L765.0 366.3 L752.0 375.0 L741.1 379.3 L730.3 381.5 L732.4 383.7 L741.1 388.0 L749.8 385.9 L747.7 394.6 L741.1 403.3 L732.4 412.0 L723.7 420.7 L719.4 429.3 L721.6 440.2 L722.7 455.4 L717.2 459.8 L710.7 466.3 L708.5 477.2 L702.0 485.9 L695.5 498.9 L686.8 507.6 L669.4 509.8 L665.0 501.1 L658.5 490.2 L656.3 475.0 L649.8 462.0 L652.0 448.9 L654.2 440.2 L649.8 427.2 L643.3 416.3 L641.1 405.4 L632.4 403.3 L619.4 401.1 L599.8 403.3 L591.1 396.7 L582.4 385.9 L575.9 377.2 L578.1 368.5 L575.9 357.6 L582.4 344.6 L591.1 338.0 L595.5 329.3 L599.8 325.0 L584.6 345.4 L595.5 334.6 L599.8 323.7 L606.3 321.5 L597.7 308.5 L595.5 293.3 L604.2 291.1 L615.0 288.9 L615.0 278.0 L609.6 273.7 L617.2 267.2 L623.7 260.7 L632.4 254.1 L643.3 245.4 L644.4 236.7 L634.6 228.0Z"/>
<path fill="#f0ece6" d="M752.4 143.5 L761.1 130.4 L767.7 115.2 L776.3 106.5 L791.6 97.8 L795.9 102.2 L782.9 108.7 L769.8 121.7 L761.1 139.1 L765.5 154.3 L756.8 152.2 L752.4 147.8Z"/>
<path fill="#f0ece6" d="M854.6 56.5 L861.1 39.1 L867.7 41.3 L874.2 60.9 L876.3 71.7 L887.2 69.6 L889.4 78.3 L876.3 82.6 L872.0 71.7 L861.1 69.6 L854.6 58.7Z"/>
<path fill="#e6ebc7" d="M972.0 108.7 L989.4 106.5 L991.6 115.2 L976.3 119.6Z"/>
<path fill="#e6ebc7" d="M995.9 113.0 L1004.6 117.4 L1000.3 118.5Z"/>
<path fill="#f0ece6" d="M759.0 43.5 L767.7 32.6 L785.0 39.1 L785.0 45.7 L774.2 50.0 L765.5 54.3 L759.0 47.8Z"/>
<path fill="#f0ece6" d="M737.2 45.7 L750.3 43.5 L741.6 53.3Z"/>
<path fill="#e6ebc7" d="M1078.1 150.0 L1086.8 149.6 L1087.2 152.6 L1079.2 152.6Z"/>
<path fill="#e6ebc7" d="M824.2 392.0 L828.5 394.1 L828.5 398.5 L825.3 398.5Z"/>
<path fill="#e6ebc7" d="M731.8 461.5 L739.4 452.8 L745.9 448.5 L748.1 455.0 L743.7 470.2 L739.4 481.1 L730.7 481.1 L730.7 470.2Z"/>
<path fill="#e6ebc7" d="M864.4 402.8 L872.0 405.0 L882.9 418.0 L890.5 428.9 L887.2 431.1 L878.5 426.7 L869.8 413.7 L863.3 407.2Z"/>
<path fill="#e6ebc7" d="M891.6 432.2 L900.3 433.3 L911.1 435.4 L913.3 437.6 L902.4 437.6 L893.7 435.4Z"/>
<path fill="#e6ebc7" d="M900.3 411.5 L911.1 405.0 L919.8 398.5 L924.2 407.2 L917.7 418.0 L911.1 424.6 L902.4 420.2Z"/>
<path fill="#e6ebc7" d="M926.3 411.5 L937.2 411.5 L930.7 418.0 L932.9 426.7 L928.5 428.9 L926.3 422.4 L924.2 415.9Z"/>
<path fill="#e6ebc7" d="M928.1 348.5 L933.3 349.6 L930.7 357.2 L928.1 355.0Z"/>
<path fill="#e6ebc7" d="M928.1 368.0 L933.3 369.1 L934.0 381.1 L929.6 380.0Z"/>
<path fill="#e6ebc7" d="M932.8 387.0 L943.2 386.2 L944.7 393.7 L943.2 402.6 L937.2 403.4 L934.3 396.7Z"/>
<path fill="#e6ebc7" d="M913.3 472.4 L930.7 461.5 L939.4 452.8 L952.4 448.5 L963.3 446.3 L969.8 455.0 L980.7 455.0 L985.0 446.3 L991.6 459.3 L1000.3 468.0 L1011.1 478.9 L1013.3 492.0 L1006.8 507.2 L1002.4 520.2 L989.4 522.4 L978.5 513.7 L965.5 507.2 L956.8 505.0 L945.9 500.7 L932.9 505.0 L919.8 507.2 L915.5 500.7 L911.1 478.9Z"/>
<path fill="#e6ebc7" d="M412.0 392.3 L418.8 391.1 L425.6 387.7 L434.7 384.3 L441.5 386.6 L457.5 387.7 L471.1 394.5 L484.7 401.4 L489.3 412.7 L500.6 417.3 L516.5 424.1 L527.9 430.9 L527.9 437.7 L521.1 444.5 L516.5 453.6 L516.5 469.5 L509.7 476.4 L493.8 483.2 L493.8 492.3 L484.7 501.4 L480.2 510.5 L471.1 512.7 L471.1 519.5 L462.0 524.1 L457.5 528.6 L452.9 530.9 L452.9 537.7 L448.4 544.5 L448.4 553.6 L441.5 560.5 L441.5 574.1 L448.4 583.2 L441.5 586.6 L434.7 583.2 L427.9 574.1 L425.6 560.5 L427.9 546.8 L430.2 533.2 L430.2 524.1 L434.7 505.9 L435.9 492.3 L437.0 478.6 L439.3 467.3 L430.2 460.5 L421.1 451.4 L414.3 442.3 L409.7 433.2 L412.0 424.1 L414.3 415.0 L418.8 405.9 L416.5 399.1 L414.3 394.5 L407.5 391.1Z"/>
<path fill="#f0ece6" d="M0.0 649.1 L22.9 647.2 L45.9 647.2 L68.8 652.9 L76.4 658.6 L91.7 659.8 L91.7 668.2 L0.0 668.2Z"/>
<path fill="#f0ece6" d="M443.3 668.2 L443.3 652.9 L454.8 635.7 L470.0 628.1 L471.9 631.9 L462.4 641.4 L462.4 668.2Z"/>
<path fill="#f0ece6" d="M724.9 660.5 L736.4 654.8 L751.6 645.2 L759.3 643.3 L766.9 649.1 L782.2 653.7 L797.5 656.0 L799.4 660.5 L820.4 660.5 L835.7 647.2 L851.0 645.2 L866.3 639.5 L873.9 641.4 L885.4 645.2 L900.7 647.2 L908.3 643.3 L916.0 647.2 L927.4 647.2 L942.7 646.0 L954.2 647.2 L961.8 644.1 L980.9 647.2 L996.2 652.9 L1003.9 660.5 L1011.5 660.5 L1019.1 658.6 L1023.0 668.2 L724.9 668.2Z"/>
<path fill="#e6ebc7" d="M982.5 254.9 L985.5 252.4 L987.5 254.9 L988.5 267.7 L985.5 270.7 L985.5 279.6 L984.0 279.6 L983.5 269.7 L981.5 259.8Z"/>
<path fill="#e6ebc7" d="M979.6 295.4 L983.5 285.5 L988.5 288.5 L991.4 291.5 L989.4 294.4 L985.5 294.4 L981.5 293.4Z"/>
<path fill="#e6ebc7" d="M978.6 299.9 L983.0 299.9 L984.0 308.3 L982.5 315.2 L975.6 318.6 L968.7 322.1 L961.8 325.1 L958.3 329.0 L953.4 327.0 L955.8 320.1 L962.8 315.7 L970.7 312.7 L975.6 307.3Z"/>
<path fill="#e6ebc7" d="M952.9 325.6 L957.3 325.6 L956.8 330.5 L953.7 330.5Z"/>
<path fill="#e6ebc7" d="M991.1 531.3 L999.0 531.3 L998.0 538.2 L993.1 538.2Z"/>
<path fill="#e6ebc7" d="M1065.2 513.5 L1070.2 519.4 L1076.1 521.4 L1070.2 531.3 L1068.2 523.4 L1066.2 517.5Z"/>
<path fill="#e6ebc7" d="M1062.3 531.3 L1066.2 533.3 L1062.3 541.2 L1054.4 549.1 L1050.4 551.1 L1048.4 545.1 L1056.3 539.2Z"/>
<path fill="#e6ebc7" d="M957.5 416.6 L963.4 418.6 L977.2 422.6 L987.1 424.5 L995.0 432.5 L1004.9 442.3 L995.0 440.4 L981.2 436.4 L973.3 432.5 L967.4 424.5 L959.5 420.6Z"/>
<path fill="#e6ebc7" d="M463.1 569.5 L468.8 569.1 L469.3 571.8 L463.8 572.3Z"/>
<path fill="#f0ece6" d="M304.2 102.4 L311.4 93.5 L319.4 90.4 L321.1 91.7 L319.4 102.4 L312.2 106.8 L304.2 106.8Z"/>
<path fill="#f0ece6" d="M330.0 77.5 L335.4 74.8 L338.0 77.5 L335.4 80.1 L330.5 79.7Z"/>
<path fill="#f0ece6" d="M324.7 84.1 L335.4 82.8 L335.4 89.9 L330.9 90.8Z"/>
<path fill="#f0ece6" d="M318.5 111.3 L322.0 102.4 L327.4 104.1 L333.6 111.3 L337.2 105.0 L336.7 99.7 L339.8 100.6 L340.7 107.7 L347.8 108.6 L346.0 116.6 L335.4 118.4 L330.0 121.9 L326.5 120.2 L329.1 116.6 L319.4 115.7Z"/>
<path fill="#f0ece6" d="M351.4 100.6 L356.7 107.7 L359.4 100.6 L365.6 100.1 L368.3 107.7 L366.5 115.7 L362.1 116.6 L360.3 111.3 L354.9 109.5Z"/>
<path fill="#f0ece6" d="M347.8 68.6 L351.4 66.3 L359.4 73.0 L362.9 77.5 L363.8 84.6 L360.3 85.0 L354.9 80.1 L350.5 78.3 L353.2 74.8Z"/>
<path fill="#f0ece6" d="M367.0 75.7 L369.2 73.9 L373.6 78.3 L373.6 84.6 L370.1 85.0Z"/>
<path fill="#f0ece6" d="M372.7 86.8 L379.0 86.8 L379.0 89.9 L372.7 89.9Z"/>
<path fill="#f0ece6" d="M384.7 89.0 L387.9 89.0 L387.9 92.6 L384.7 92.6Z"/>
<path fill="#f0ece6" d="M371.8 113.0 L376.3 111.3 L379.0 118.4 L373.6 119.3Z"/>
<path fill="#f0ece6" d="M299.8 123.7 L306.9 121.9 L317.6 125.5 L321.1 130.8 L323.8 136.2 L320.3 139.7 L314.0 138.8 L309.6 145.1 L305.1 149.5 L298.0 145.1 L297.1 140.6Z"/>
<path fill="#f0ece6" d="M356.7 136.2 L362.1 132.6 L360.3 129.0 L366.5 126.4 L369.2 127.3 L368.3 136.2 L370.1 140.6 L367.4 147.7 L363.8 148.6 L358.5 140.6Z"/>
<path fill="#f0ece6" d="M374.5 127.3 L385.2 126.4 L386.1 129.0 L381.6 136.2 L377.2 138.8 L376.3 145.1 L379.9 155.0 L371.0 155.0 L374.5 143.3 L373.6 137.9Z"/>
<path fill="#efe9e2" d="M672.0 326.7 L693.7 323.5 L709.0 313.7 L737.2 309.3 L763.3 322.4 L785.0 333.3 L796.3 345.2 L778.5 344.1 L765.5 342.0 L756.8 343.0 L754.6 347.4 L767.7 351.7 L772.0 357.8 L754.6 372.4 L737.2 378.9 L728.5 381.1 L715.5 361.5 L706.8 344.1 L672.0 335.4Z"/>
<path fill="#efe9e2" d="M806.8 298.5 L828.5 285.4 L867.7 282.2 L902.4 287.6 L889.4 307.2 L867.7 318.0 L859.0 326.7 L841.6 330.0 L824.2 327.8 L811.1 322.4 L802.4 309.3Z"/>
<path fill="#efe9e2" d="M577.0 376.1 L575.9 357.6 L582.4 344.6 L591.1 338.0 L595.5 329.3 L599.8 325.0 L615.0 329.3 L654.2 331.5 L669.4 333.7 L686.8 333.7 L710.7 331.5 L708.5 342.4 L719.4 368.5 L723.7 375.0 L697.7 377.2 L675.9 375.0 L632.4 372.8 L599.8 370.7Z"/>
<path fill="#efe9e2" d="M911.6 476.7 L930.7 464.8 L923.9 469.0 L931.8 465.1 L943.6 464.1 L955.5 466.1 L971.3 468.0 L983.2 472.0 L991.1 477.9 L993.1 491.8 L991.1 503.6 L979.2 511.5 L971.3 507.6 L963.4 503.6 L951.5 501.6 L939.7 503.6 L927.8 505.6 L917.9 507.6 L918.7 506.1 L915.0 496.3Z"/>
<path fill="#75cff0" d="M302.1 185.9 L310.7 181.6 L315.0 185.9 L305.0 193.1Z"/>
<path fill="#75cff0" d="M320.8 214.6 L325.1 210.3 L327.9 213.2 L322.2 216.7Z"/>
<path fill="#75cff0" d="M385.7 277.4 L398.7 273.0 L405.3 277.4 L392.2 281.7Z"/>
<path fill="#75cff0" d="M394.4 281.7 L398.7 279.6 L399.8 294.8 L395.5 292.6Z"/>
<path fill="#75cff0" d="M403.1 281.7 L407.4 283.9 L411.8 290.4 L406.3 292.6Z"/>
<path fill="#75cff0" d="M405.3 297.0 L414.0 294.8 L411.8 298.0 L407.4 299.1Z"/>
<path fill="#75cff0" d="M364.0 251.3 L368.3 253.5 L368.3 257.8 L365.0 256.7Z"/>
<path fill="#75cff0" d="M324.8 330.7 L328.1 331.7 L337.9 351.3 L334.6 351.3Z"/>
<path fill="#75cff0" d="M385.2 41.6 L401.0 48.0 L416.7 43.0 L415.3 47.3 L402.4 53.0 L390.9 48.7Z"/>
<path fill="#75cff0" d="M691.1 293.3 L697.7 282.4 L710.7 282.4 L715.0 278.0 L719.4 291.1 L725.9 295.4 L723.7 299.8 L710.7 299.8 L693.3 299.8Z"/>
<path fill="#75cff0" d="M741.1 286.7 L749.8 280.2 L756.3 280.2 L752.0 286.7 L758.5 297.6 L756.3 308.5 L747.7 312.8 L744.4 304.1Z"/>
<path fill="#75cff0" d="M706.3 341.3 L710.7 339.1 L717.2 353.3 L723.7 366.3 L730.3 379.3 L728.1 382.6 L719.4 372.8 L712.9 359.8Z"/>
<path fill="#75cff0" d="M743.3 335.9 L747.7 333.7 L754.2 342.4 L762.9 348.9 L771.6 356.5 L765.0 351.1 L756.3 351.1 L749.8 344.6Z"/>
<path fill="#75cff0" d="M700.9 416.3 L705.3 415.2 L706.3 419.6 L702.0 421.7Z"/>
<path fill="#75cff0" d="M899.2 243.7 L902.0 242.4 L898.1 251.7 L894.2 255.4 L895.0 251.5Z"/>
<path fill="#75cff0" d="M693.7 214.8 L699.2 212.6 L703.5 217.0 L700.3 221.3 L695.5 220.2Z"/>
<path fill="#75cff0" d="M640.3 237.8 L638.3 230.9 L646.2 229.0 L651.1 234.9 L651.1 239.8 L657.1 239.8 L661.0 233.9 L662.0 229.0 L666.0 225.0 L665.0 223.7 L667.2 210.7 L675.9 197.6 L680.3 190.0 L684.6 193.3 L680.3 202.0 L673.7 209.6 L673.7 219.3 L677.0 222.6 L692.2 220.4 L693.3 223.7 L680.3 228.0 L681.8 225.0 L680.8 233.4 L675.4 234.4 L673.9 239.8 L670.9 246.2 L657.1 250.2 L646.2 248.7 L650.2 244.8 L645.2 242.8 L645.2 234.9Z"/>
<path fill="#75cff0" d="M604.7 316.9 L617.6 304.0 L618.6 300.1 L626.5 294.1 L634.4 290.2 L641.3 288.2 L647.2 294.1 L655.1 300.1 L660.0 304.0 L662.0 307.0 L664.0 302.1 L659.1 297.1 L653.1 292.2 L650.2 284.3 L659.1 288.2 L667.9 294.1 L668.9 300.1 L675.8 311.9 L679.8 310.0 L678.8 304.0 L680.8 300.1 L686.7 300.1 L688.7 307.0 L694.6 313.9 L708.5 315.0 L710.7 325.9 L702.0 331.3 L673.7 332.4 L665.0 328.0 L649.8 325.9 L643.3 317.2 L623.7 315.0 L608.5 320.4Z"/>
<path fill="#e6ebc7" d="M641.3 294.1 L643.0 294.1 L643.7 305.0 L641.3 305.0Z"/>
<path fill="#e6ebc7" d="M652.1 310.0 L658.1 309.8 L657.1 312.9 L653.1 312.4Z"/>
<path fill="#e6ebc7" d="M603.2 233.9 L608.7 229.0 L611.6 232.9 L612.6 240.8 L617.6 250.7 L622.5 256.6 L620.5 261.6 L607.7 264.5 L608.7 254.6 L606.7 244.8 L603.7 237.8Z"/>
<path fill="#e6ebc7" d="M594.3 249.7 L599.8 244.8 L603.7 246.7 L602.7 256.6 L594.8 259.6Z"/>
</g>
<circle cx="857.6" cy="378.8" r="1.95" fill="#d62728"/>
<circle cx="855.1" cy="395.2" r="1.95" fill="#d62728"/>
<circle cx="857.6" cy="409.3" r="1.95" fill="#8c564b"/>
<circle cx="861.3" cy="410.4" r="1.95" fill="#d62728"/>
<circle cx="865.5" cy="406.8" r="1.95" fill="#8c564b"/>
<circle cx="868.0" cy="410.1" r="1.95" fill="#d62728"/>
<circle cx="856.4" cy="413.5" r="1.95" fill="#d62728"/>
<circle cx="875.5" cy="417.2" r="1.95" fill="#d62728"/>
<circle cx="877.7" cy="422.3" r="1.95" fill="#d62728"/>
<circle cx="875.9" cy="424.3" r="1.95" fill="#d62728"/>
<circle cx="879.2" cy="426.9" r="1.95" fill="#d62728"/>
<circle cx="881.0" cy="427.6" r="1.95" fill="#d62728"/>
<circle cx="861.0" cy="428.1" r="1.95" fill="#d62728"/>
<circle cx="894.8" cy="430.6" r="1.95" fill="#d62728"/>
<circle cx="894.8" cy="439.5" r="1.95" fill="#d62728"/>
<circle cx="909.0" cy="442.5" r="1.95" fill="#d62728"/>
<circle cx="922.8" cy="444.3" r="1.95" fill="#d62728"/>
<circle cx="869.1" cy="451.3" r="1.95" fill="#d62728"/>
<circle cx="931.3" cy="372.9" r="1.95" fill="#d62728"/>
<circle cx="932.5" cy="373.2" r="1.95" fill="#d62728"/>
<circle cx="944.1" cy="387.4" r="1.95" fill="#d62728"/>
<circle cx="944.7" cy="394.0" r="1.95" fill="#d62728"/>
<circle cx="943.9" cy="398.2" r="1.95" fill="#d62728"/>
<circle cx="935.8" cy="398.2" r="1.95" fill="#d62728"/>
<circle cx="937.2" cy="399.6" r="1.95" fill="#d62728"/>
<circle cx="940.2" cy="402.3" r="1.95" fill="#d62728"/>
<circle cx="945.9" cy="403.5" r="1.95" fill="#d62728"/>
<circle cx="938.0" cy="405.9" r="1.95" fill="#d62728"/>
<circle cx="949.0" cy="409.2" r="1.95" fill="#d62728"/>
<circle cx="943.6" cy="411.2" r="1.95" fill="#d62728"/>
<circle cx="943.2" cy="412.7" r="1.95" fill="#d62728"/>
<circle cx="934.6" cy="412.3" r="1.95" fill="#d62728"/>
<circle cx="926.8" cy="413.5" r="1.95" fill="#d62728"/>
<circle cx="926.8" cy="416.3" r="1.95" fill="#d62728"/>
<circle cx="936.2" cy="418.2" r="1.95" fill="#d62728"/>
<circle cx="939.8" cy="420.5" r="1.95" fill="#d62728"/>
<circle cx="942.6" cy="422.3" r="1.95" fill="#d62728"/>
<circle cx="937.2" cy="426.1" r="1.95" fill="#d62728"/>
<circle cx="948.0" cy="429.4" r="1.95" fill="#d62728"/>
<circle cx="950.6" cy="432.7" r="1.95" fill="#d62728"/>
<circle cx="952.3" cy="433.4" r="1.95" fill="#d62728"/>
<circle cx="933.8" cy="433.6" r="1.95" fill="#d62728"/>
<circle cx="932.0" cy="437.3" r="1.95" fill="#d62728"/>
<circle cx="939.6" cy="436.5" r="1.95" fill="#d62728"/>
<circle cx="960.3" cy="416.3" r="1.95" fill="#d62728"/>
<circle cx="964.0" cy="420.0" r="1.95" fill="#d62728"/>
<circle cx="968.5" cy="419.4" r="1.95" fill="#d62728"/>
<circle cx="970.9" cy="417.5" r="1.95" fill="#d62728"/>
<circle cx="976.7" cy="422.7" r="1.95" fill="#d62728"/>
<circle cx="978.2" cy="423.8" r="1.95" fill="#d62728"/>
<circle cx="986.0" cy="423.8" r="1.95" fill="#d62728"/>
<circle cx="985.6" cy="431.2" r="1.95" fill="#d62728"/>
<circle cx="995.0" cy="434.9" r="1.95" fill="#d62728"/>
<circle cx="992.3" cy="366.9" r="1.95" fill="#d62728"/>
<circle cx="998.0" cy="376.1" r="1.95" fill="#d62728"/>
<circle cx="990.8" cy="381.8" r="1.95" fill="#d62728"/>
<circle cx="984.9" cy="357.2" r="1.95" fill="#d62728"/>
<circle cx="988.6" cy="356.5" r="1.95" fill="#d62728"/>
<circle cx="940.8" cy="356.5" r="1.95" fill="#d62728"/>
<circle cx="1007.2" cy="428.7" r="1.95" fill="#d62728"/>
<circle cx="1010.2" cy="426.4" r="1.95" fill="#d62728"/>
<circle cx="1013.1" cy="427.9" r="1.95" fill="#d62728"/>
<circle cx="1011.6" cy="430.9" r="1.95" fill="#d62728"/>
<circle cx="1014.6" cy="429.4" r="1.95" fill="#d62728"/>
<circle cx="1017.6" cy="432.4" r="1.95" fill="#d62728"/>
<circle cx="1009.4" cy="429.4" r="1.95" fill="#d62728"/>
<circle cx="1012.4" cy="425.7" r="1.95" fill="#d62728"/>
<circle cx="1022.4" cy="437.1" r="1.95" fill="#d62728"/>
<circle cx="1031.0" cy="441.0" r="1.95" fill="#d62728"/>
<circle cx="1033.2" cy="442.8" r="1.95" fill="#d62728"/>
<circle cx="1035.5" cy="444.6" r="1.95" fill="#d62728"/>
<circle cx="1043.2" cy="443.5" r="1.95" fill="#d62728"/>
<circle cx="1045.9" cy="447.3" r="1.95" fill="#d62728"/>
<circle cx="1047.4" cy="450.2" r="1.95" fill="#d62728"/>
<circle cx="1048.1" cy="453.2" r="1.95" fill="#d62728"/>
<circle cx="1048.8" cy="456.2" r="1.95" fill="#d62728"/>
<circle cx="1051.1" cy="458.1" r="1.95" fill="#d62728"/>
<circle cx="1049.6" cy="463.3" r="1.95" fill="#d62728"/>
<circle cx="1054.1" cy="473.3" r="1.95" fill="#d62728"/>
<circle cx="1056.3" cy="475.5" r="1.95" fill="#d62728"/>
<circle cx="1059.6" cy="476.3" r="1.95" fill="#d62728"/>
<circle cx="1068.8" cy="473.8" r="1.95" fill="#d62728"/>
<circle cx="1079.8" cy="463.9" r="1.95" fill="#d62728"/>
<circle cx="1077.4" cy="478.5" r="1.95" fill="#d62728"/>
<circle cx="350.9" cy="365.7" r="1.95" fill="#d62728"/>
<circle cx="354.2" cy="367.2" r="1.95" fill="#d62728"/>
<circle cx="356.3" cy="368.3" r="1.95" fill="#d62728"/>
<circle cx="358.5" cy="368.9" r="1.95" fill="#d62728"/>
<circle cx="364.4" cy="371.1" r="1.95" fill="#d62728"/>
<circle cx="370.3" cy="373.7" r="1.95" fill="#d62728"/>
<circle cx="377.7" cy="376.5" r="1.95" fill="#d62728"/>
<circle cx="389.8" cy="375.4" r="1.95" fill="#d62728"/>
<circle cx="391.1" cy="381.5" r="1.95" fill="#d62728"/>
<circle cx="394.4" cy="384.8" r="1.95" fill="#d62728"/>
<circle cx="399.8" cy="389.1" r="1.95" fill="#d62728"/>
<circle cx="405.3" cy="390.7" r="1.95" fill="#d62728"/>
<circle cx="404.2" cy="369.6" r="1.95" fill="#d62728"/>
<circle cx="416.6" cy="364.6" r="1.95" fill="#d62728"/>
<circle cx="459.4" cy="370.2" r="1.95" fill="#d62728"/>
<circle cx="414.4" cy="411.3" r="1.95" fill="#d62728"/>
<circle cx="413.7" cy="414.1" r="1.95" fill="#d62728"/>
<circle cx="420.9" cy="421.1" r="1.95" fill="#d62728"/>
<circle cx="432.4" cy="419.3" r="1.95" fill="#d62728"/>
<circle cx="421.6" cy="426.5" r="1.95" fill="#d62728"/>
<circle cx="423.1" cy="429.8" r="1.95" fill="#d62728"/>
<circle cx="425.9" cy="430.4" r="1.95" fill="#d62728"/>
<circle cx="410.7" cy="433.0" r="1.95" fill="#d62728"/>
<circle cx="414.4" cy="440.2" r="1.95" fill="#d62728"/>
<circle cx="416.6" cy="438.9" r="1.95" fill="#d62728"/>
<circle cx="417.7" cy="442.8" r="1.95" fill="#d62728"/>
<circle cx="419.2" cy="447.2" r="1.95" fill="#d62728"/>
<circle cx="422.4" cy="450.4" r="1.95" fill="#d62728"/>
<circle cx="424.6" cy="454.3" r="1.95" fill="#d62728"/>
<circle cx="429.6" cy="457.6" r="1.95" fill="#d62728"/>
<circle cx="434.0" cy="461.3" r="1.95" fill="#d62728"/>
<circle cx="435.0" cy="439.6" r="1.95" fill="#d62728"/>
<circle cx="436.8" cy="443.3" r="1.95" fill="#d62728"/>
<circle cx="440.5" cy="450.9" r="1.95" fill="#d62728"/>
<circle cx="445.5" cy="451.5" r="1.95" fill="#d62728"/>
<circle cx="437.2" cy="466.7" r="1.95" fill="#d62728"/>
<circle cx="438.3" cy="469.3" r="1.95" fill="#d62728"/>
<circle cx="441.1" cy="467.8" r="1.95" fill="#d62728"/>
<circle cx="447.4" cy="470.4" r="1.95" fill="#d62728"/>
<circle cx="439.4" cy="474.3" r="1.95" fill="#d62728"/>
<circle cx="439.0" cy="477.6" r="1.95" fill="#d62728"/>
<circle cx="444.4" cy="478.7" r="1.95" fill="#d62728"/>
<circle cx="437.7" cy="483.0" r="1.95" fill="#d62728"/>
<circle cx="434.4" cy="501.1" r="1.95" fill="#d62728"/>
<circle cx="435.7" cy="503.7" r="1.95" fill="#d62728"/>
<circle cx="434.0" cy="505.9" r="1.95" fill="#d62728"/>
<circle cx="431.8" cy="515.0" r="1.95" fill="#8c564b"/>
<circle cx="431.3" cy="518.9" r="1.95" fill="#d62728"/>
<circle cx="430.3" cy="521.5" r="1.95" fill="#d62728"/>
<circle cx="428.5" cy="539.6" r="1.95" fill="#d62728"/>
<circle cx="431.8" cy="548.3" r="1.95" fill="#d62728"/>
<circle cx="991.4" cy="267.5" r="1.95" fill="#d62728"/>
<circle cx="987.5" cy="282.6" r="1.95" fill="#d62728"/>
<circle cx="976.6" cy="293.4" r="1.95" fill="#d62728"/>
<circle cx="988.0" cy="291.5" r="1.95" fill="#d62728"/>
<circle cx="993.4" cy="292.0" r="1.95" fill="#d62728"/>
<circle cx="997.4" cy="290.0" r="1.95" fill="#d62728"/>
<circle cx="998.8" cy="291.3" r="1.95" fill="#d62728"/>
<circle cx="1000.3" cy="285.7" r="1.95" fill="#d62728"/>
<circle cx="1002.3" cy="286.5" r="1.95" fill="#8c564b"/>
<circle cx="1006.3" cy="283.6" r="1.95" fill="#d62728"/>
<circle cx="1005.8" cy="287.0" r="1.95" fill="#d62728"/>
<circle cx="1000.8" cy="288.5" r="1.95" fill="#d62728"/>
<circle cx="1012.7" cy="279.6" r="1.95" fill="#d62728"/>
<circle cx="1016.1" cy="280.1" r="1.95" fill="#d62728"/>
<circle cx="1015.6" cy="281.6" r="1.95" fill="#d62728"/>
<circle cx="988.5" cy="296.4" r="1.95" fill="#d62728"/>
<circle cx="987.0" cy="298.4" r="1.95" fill="#d62728"/>
<circle cx="986.0" cy="300.4" r="1.95" fill="#d62728"/>
<circle cx="987.5" cy="302.3" r="1.95" fill="#d62728"/>
<circle cx="986.5" cy="303.8" r="1.95" fill="#d62728"/>
<circle cx="976.6" cy="308.3" r="1.95" fill="#d62728"/>
<circle cx="984.0" cy="308.8" r="1.95" fill="#8c564b"/>
<circle cx="990.4" cy="309.4" r="1.95" fill="#d62728"/>
<circle cx="981.5" cy="315.4" r="1.95" fill="#d62728"/>
<circle cx="982.5" cy="322.3" r="1.95" fill="#d62728"/>
<circle cx="958.8" cy="327.0" r="1.95" fill="#d62728"/>
<circle cx="956.6" cy="329.5" r="1.95" fill="#d62728"/>
<circle cx="980.1" cy="340.9" r="1.95" fill="#d62728"/>
<circle cx="1011.7" cy="250.4" r="1.95" fill="#d62728"/>
<circle cx="1012.7" cy="246.0" r="1.95" fill="#d62728"/>
<circle cx="1034.9" cy="246.5" r="1.95" fill="#d62728"/>
<circle cx="1052.7" cy="248.0" r="1.95" fill="#d62728"/>
<circle cx="1029.0" cy="252.9" r="1.95" fill="#d62728"/>
<circle cx="1029.5" cy="255.9" r="1.95" fill="#8c564b"/>
<circle cx="1024.5" cy="261.8" r="1.95" fill="#d62728"/>
<circle cx="1024.0" cy="270.9" r="1.95" fill="#d62728"/>
<circle cx="187.9" cy="254.1" r="1.95" fill="#d62728"/>
<circle cx="208.5" cy="247.4" r="1.95" fill="#d62728"/>
<circle cx="210.7" cy="245.9" r="1.95" fill="#d62728"/>
<circle cx="212.9" cy="244.1" r="1.95" fill="#d62728"/>
<circle cx="235.7" cy="241.1" r="1.95" fill="#d62728"/>
<circle cx="251.3" cy="236.5" r="1.95" fill="#d62728"/>
<circle cx="252.0" cy="228.0" r="1.95" fill="#d62728"/>
<circle cx="240.0" cy="216.5" r="1.95" fill="#8c564b"/>
<circle cx="267.9" cy="230.7" r="1.95" fill="#d62728"/>
<circle cx="270.0" cy="237.6" r="1.95" fill="#d62728"/>
<circle cx="272.2" cy="244.3" r="1.95" fill="#d62728"/>
<circle cx="279.2" cy="255.2" r="1.95" fill="#d62728"/>
<circle cx="313.1" cy="319.3" r="1.95" fill="#d62728"/>
<circle cx="220.5" cy="364.8" r="1.95" fill="#d62728"/>
<circle cx="1048.1" cy="216.3" r="1.95" fill="#d62728"/>
<circle cx="1052.9" cy="247.8" r="1.95" fill="#d62728"/>
<circle cx="1064.8" cy="253.5" r="1.95" fill="#d62728"/>
<circle cx="1078.1" cy="258.9" r="1.95" fill="#d62728"/>
<circle cx="1077.9" cy="262.0" r="1.95" fill="#8c564b"/>
<circle cx="1075.9" cy="265.4" r="1.95" fill="#d62728"/>
<circle cx="922.0" cy="304.6" r="1.95" fill="#d62728"/>
<circle cx="874.2" cy="285.0" r="1.95" fill="#d62728"/>
<circle cx="843.1" cy="319.1" r="1.95" fill="#d62728"/>
<circle cx="851.3" cy="316.3" r="1.95" fill="#d62728"/>
<circle cx="853.5" cy="331.1" r="1.95" fill="#d62728"/>
<circle cx="884.6" cy="331.1" r="1.95" fill="#d62728"/>
<circle cx="836.6" cy="339.8" r="1.95" fill="#d62728"/>
<circle cx="866.6" cy="339.3" r="1.95" fill="#8c564b"/>
<circle cx="874.8" cy="355.0" r="1.95" fill="#d62728"/>
<circle cx="979.6" cy="340.9" r="1.95" fill="#d62728"/>
<circle cx="985.5" cy="357.2" r="1.95" fill="#d62728"/>
<circle cx="988.3" cy="356.5" r="1.95" fill="#d62728"/>
<circle cx="992.7" cy="367.0" r="1.95" fill="#d62728"/>
<circle cx="998.1" cy="376.1" r="1.95" fill="#d62728"/>
<circle cx="991.1" cy="381.5" r="1.95" fill="#d62728"/>
<circle cx="159.5" cy="455.4" r="1.95" fill="#d62728"/>
<circle cx="174.2" cy="454.2" r="1.95" fill="#d62728"/>
<circle cx="176.5" cy="455.4" r="1.95" fill="#d62728"/>
<circle cx="175.8" cy="457.8" r="1.95" fill="#d62728"/>
<circle cx="176.5" cy="459.4" r="1.95" fill="#d62728"/>
<circle cx="160.9" cy="462.5" r="1.95" fill="#d62728"/>
<circle cx="166.9" cy="466.9" r="1.95" fill="#d62728"/>
<circle cx="171.4" cy="468.3" r="1.95" fill="#d62728"/>
<circle cx="157.6" cy="472.4" r="1.95" fill="#d62728"/>
<circle cx="164.7" cy="473.6" r="1.95" fill="#d62728"/>
<circle cx="170.1" cy="476.2" r="1.95" fill="#d62728"/>
<circle cx="164.5" cy="481.0" r="1.95" fill="#d62728"/>
<circle cx="169.0" cy="481.5" r="1.95" fill="#d62728"/>
<circle cx="162.8" cy="484.7" r="1.95" fill="#d62728"/>
<circle cx="162.7" cy="491.4" r="1.95" fill="#d62728"/>
<circle cx="165.5" cy="490.6" r="1.95" fill="#d62728"/>
<circle cx="167.8" cy="491.4" r="1.95" fill="#d62728"/>
<circle cx="163.9" cy="495.0" r="1.95" fill="#d62728"/>
<circle cx="166.3" cy="495.0" r="1.95" fill="#d62728"/>
<circle cx="573.3" cy="316.1" r="1.95" fill="#d62728"/>
<circle cx="591.6" cy="316.1" r="1.95" fill="#d62728"/>
<circle cx="609.6" cy="312.8" r="1.95" fill="#d62728"/>
<circle cx="687.9" cy="283.0" r="1.95" fill="#d62728"/>
<circle cx="695.5" cy="300.4" r="1.95" fill="#d62728"/>
<circle cx="685.7" cy="314.1" r="1.95" fill="#d62728"/>
<circle cx="799.8" cy="314.6" r="1.95" fill="#d62728"/>
<circle cx="808.1" cy="320.7" r="1.95" fill="#d62728"/>
<circle cx="778.1" cy="340.2" r="1.95" fill="#d62728"/>
<circle cx="787.2" cy="343.5" r="1.95" fill="#d62728"/>
<circle cx="799.4" cy="353.3" r="1.95" fill="#d62728"/>
<circle cx="874.2" cy="284.8" r="1.95" fill="#d62728"/>
<circle cx="843.3" cy="318.9" r="1.95" fill="#d62728"/>
<circle cx="851.6" cy="316.3" r="1.95" fill="#d62728"/>
<circle cx="853.1" cy="331.3" r="1.95" fill="#d62728"/>
<circle cx="884.6" cy="331.3" r="1.95" fill="#d62728"/>
<circle cx="836.8" cy="339.6" r="1.95" fill="#d62728"/>
<circle cx="866.6" cy="339.1" r="1.95" fill="#8c564b"/>
<circle cx="874.8" cy="355.2" r="1.95" fill="#d62728"/>
<circle cx="857.4" cy="378.7" r="1.95" fill="#d62728"/>
<circle cx="854.8" cy="395.0" r="1.95" fill="#d62728"/>
<circle cx="794.8" cy="422.2" r="1.95" fill="#d62728"/>
<circle cx="1046.8" cy="548.1" r="1.95" fill="#d62728"/>
<circle cx="1063.6" cy="537.2" r="1.95" fill="#d62728"/>
<circle cx="1041.1" cy="559.4" r="1.95" fill="#d62728"/>
<circle cx="1033.4" cy="561.4" r="1.95" fill="#d62728"/>
<circle cx="1031.4" cy="573.8" r="1.95" fill="#d62728"/>
<circle cx="1079.7" cy="463.7" r="1.95" fill="#d62728"/>
<circle cx="1069.2" cy="474.0" r="1.95" fill="#d62728"/>
<circle cx="1077.3" cy="478.5" r="1.95" fill="#d62728"/>
<circle cx="1054.4" cy="473.0" r="1.95" fill="#d62728"/>
<circle cx="1057.3" cy="475.9" r="1.95" fill="#d62728"/>
<circle cx="1060.3" cy="476.3" r="1.95" fill="#d62728"/>
<circle cx="1049.8" cy="463.5" r="1.95" fill="#d62728"/>
<circle cx="240.0" cy="202.4" r="1.95" fill="#d62728"/>
<circle cx="500.0" cy="610.0" r="1.95" fill="#d62728"/>
<circle cx="506.0" cy="612.0" r="1.95" fill="#d62728"/>
<circle cx="547.0" cy="592.0" r="1.95" fill="#d62728"/>
<circle cx="553.0" cy="597.0" r="1.95" fill="#d62728"/>
<circle cx="554.0" cy="600.0" r="1.95" fill="#d62728"/>
<circle cx="767.0" cy="508.0" r="1.95" fill="#d62728"/>
<circle cx="1003.0" cy="623.0" r="1.95" fill="#d62728"/>
</svg><!--/MAPSVG-->
<div class="a" style="left:1165px;top:24px;width:78px;height:129px;background:#fff;box-shadow:0 0 3px rgba(0,0,0,0.15)"></div>
<div class="a" style="left:1186px;top:41px;width:8px;height:8px;border:1px solid #fdaa66"></div>
<div class="a" style="left:1186px;top:59px;width:8px;height:8px;border:1px solid #7fa9d0"></div>
<div class="a" style="left:1186px;top:76px;width:8px;height:8px;border:1px solid #82c882"></div>
<div class="a" style="left:1186px;top:94px;width:8px;height:8px;background:#d62728"></div>
<div class="a" style="left:1186px;top:111px;width:8px;height:8px;background:#8c564b"></div>
<div class="a" style="left:1186px;top:129px;width:8px;height:8px;background:#9467bd"></div>
<div class="a" style="left:1210px;top:36px;font-size:13px;color:#3a3a3a;line-height:17.6px">5<br>6<br>7<br>8<br>9<br>10</div>
<svg class="a" style="left:6px;top:631px" width="90" height="26" viewBox="0 0 90 26"><circle cx="11.5" cy="12.5" r="9.3" fill="#fff" stroke="#5a8a9a" stroke-width="1.3" opacity="0.95"/><path d="M6.6 17.8 L6.9 12.3 A4.9 4.9 0 1 1 12 17.4 Z" fill="#4b8aa0"/><path d="M11.8 9.4 L12.6 11.6 L14.8 12.4 L12.6 13.2 L11.8 15.4 L11 13.2 L8.8 12.4 L11 11.6Z" fill="#fff"/><text x="24" y="17.5" font-family="Liberation Sans" font-weight="bold" font-size="15.8" fill="#fff" stroke="#4f8496" stroke-width="2.1" paint-order="stroke" stroke-linejoin="round" letter-spacing="0.2">mapbox</text></svg>
<div class="a" style="left:1007px;top:642px;width:270px;height:19px;background:rgba(255,255,255,0.5);font-size:12px;color:#333;line-height:19px;padding-left:5px">© Mapbox © OpenStreetMap <b style="margin-left:3px">Improve this map</b></div>

</div>

<!-- below map -->
<div class="a" style="left:998px;top:929px;width:38px;height:1px;background:#ccc"></div>
<div class="a" style="left:998px;top:932px;width:38px;height:1px;background:#ccc"></div>
<svg class="a" style="left:380px;top:957px" width="8" height="12"><path d="M1.5 1 L6.5 6 L1.5 11" stroke="#323232" stroke-width="1.3" fill="none"/></svg>
<div class="a" style="left:403px;top:955px;font-size:15px;font-weight:bold;color:#323232">Data</div>
</body></html>
